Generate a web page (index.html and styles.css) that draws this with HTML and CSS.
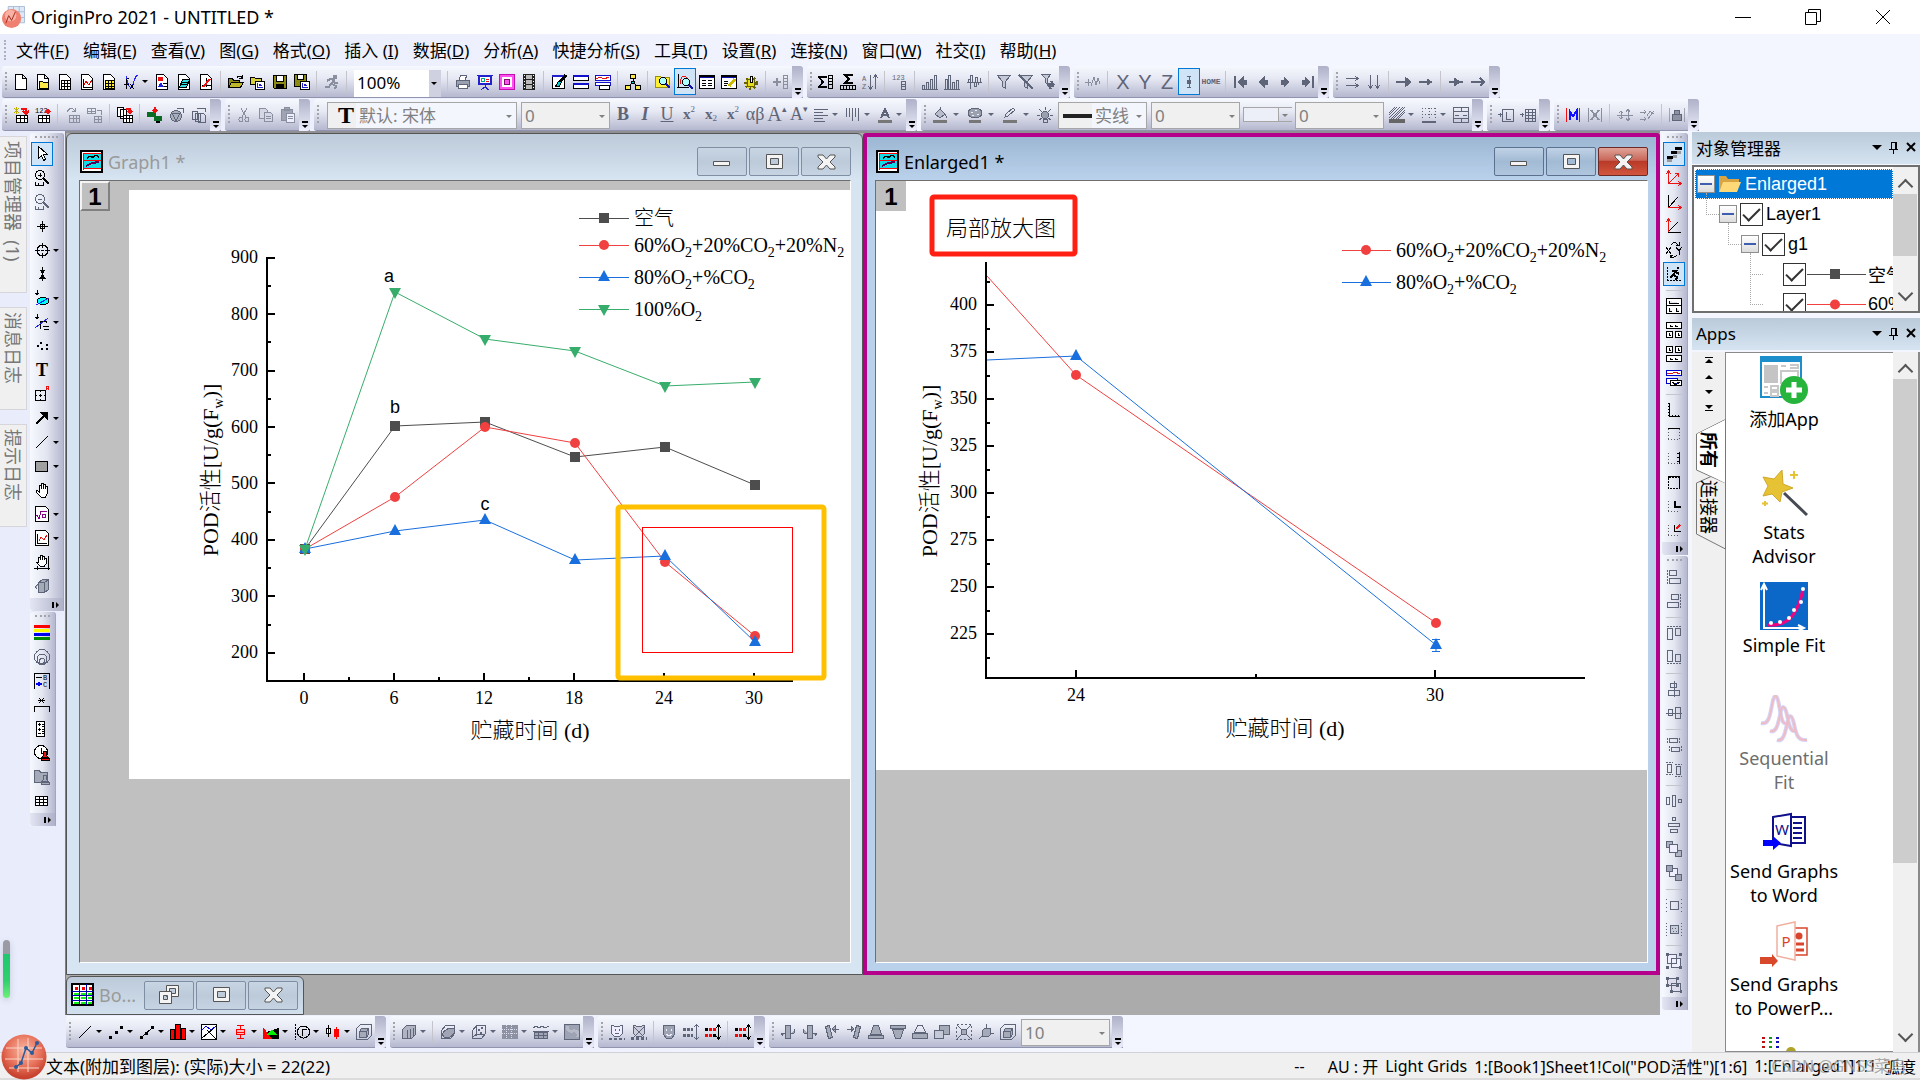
FILE: index.html
```html
<!DOCTYPE html>
<html lang="zh-CN">
<head>
	<meta charset="utf-8">
	<meta name="viewport" content="width=device-width, initial-scale=1">
	<title>OriginPro 2021 - UNTITLED *</title>
	<link rel="stylesheet" href="styles.css">
</head>
<body>
<!-- icon sprite, 16x16 unless noted -->
<svg class="sprite" aria-hidden="true">
	<symbol id="doc" viewBox="0 0 16 16"><path fill="#fff" d="M2.5.5h7l4 4v11h-11zM9.5.5v4h4"/></symbol>
	<symbol id="doc-folder" viewBox="0 0 16 16"><path fill="#fff" d="M2.5.5h7l4 4v11h-11zM9.5.5v4h4"/><path fill="#ffe94a" d="M4.5 7.5h3l1 1h5v6h-9z"/></symbol>
	<symbol id="doc-grid" viewBox="0 0 16 16"><path fill="#fff" d="M2.5.5h7l4 4v11h-11z"/><path d="M4 6.5h10M4 9.5h10M4 12.5h10M4.5 6v9M7.5 6v9M10.5 6v9"/></symbol>
	<symbol id="doc-matrix" viewBox="0 0 16 16"><path fill="#fff" d="M2.5.5h7l4 4v11h-11z"/><path fill="#ffee32" d="M4.5 6.5h9v8h-9zM4 9.5h10M4 12.5h10M7.5 6v9M10.5 6v9"/></symbol>
	<symbol id="doc-graph" viewBox="0 0 16 16"><path fill="#fff" d="M2.5.5h7l4 4v11h-11z"/><path d="M4.5 5v8.5h8"/><path stroke="#e00" d="M5 11l2-4 3 4 3-5"/></symbol>
	<symbol id="fx" viewBox="0 0 16 16"><path stroke="#22f" d="M3 2q4 18 7 8t5-8"/><path d="M6 5q-3-1-3 4v6M1 10h5M7 10l4 5M11 10l-4 5"/></symbol>
	<symbol id="doc-layout" viewBox="0 0 16 16"><path fill="#fff" d="M2.5.5h7l4 4v11h-11z"/><path stroke="none" fill="#e11" d="M4 3h5v4H4z"/><path stroke="none" fill="#22d" d="M4 13l3-5 3 5z"/><path d="M9 9.5h4M10 12.5h3"/></symbol>
	<symbol id="doc-note" viewBox="0 0 16 16"><path fill="#fff" d="M2.5.5h7l4 4v11h-11z"/><path fill="#2fe0e0" d="M6.5 5.5h7l-3 8h-7zM6 8.5h6M5 10.5h6"/></symbol>
	<symbol id="doc-arrow" viewBox="0 0 16 16"><path fill="#fff" d="M2.5.5h7l4 4v11h-11z"/><path d="M8 4v9M4 11h9"/><path stroke="#e11" stroke-width="2" d="M5 13l7-8"/></symbol>
	<symbol id="open" viewBox="0 0 16 16"><path fill="#8d8b12" d="M.5 13.5v-9h4l1 2h6v2"/><path fill="#bdb92a" d="M.5 13.5l3-5h12l-3 5z"/><path d="M9 3.5q3-3 5 0M14 1v3h-3"/></symbol>
	<symbol id="open2" viewBox="0 0 16 16"><path fill="#d8cf3a" d="M.5 10.5v-7h4l1 1h6v6z"/><path fill="#fff" d="M5.5 7.5h9v8h-9z"/><path stroke="#22c" d="M7 9v4.5h6M9 12v-2l3 2"/></symbol>
	<symbol id="save" viewBox="0 0 16 16"><path fill="#8d8b12" d="M1.5 1.5h13v13h-12l-1-1z"/><path fill="#fff" d="M4.5 1.5h7v6h-7z"/><path fill="#000" d="M4.5 10.5h7v4h-7z"/></symbol>
	<symbol id="save2" viewBox="0 0 16 16"><path fill="#8d8b12" d="M.5.5h12v12H.5z"/><path fill="#fff" d="M3.5.5h6v5h-6zM6.5 7.5h9v8h-9z"/><path stroke="#22c" d="M8 9v4.5h6M10 12v-2l3 2"/></symbol>
	<symbol id="run" viewBox="0 0 16 16"><circle cx="11" cy="3" r="2" fill="currentColor"/><path stroke-width="2" d="M3 7l3-2h4l-2 5 4 2-1 3M7 9l-2 4H1M9 6l2 3h3"/></symbol>
	<symbol id="print" viewBox="0 0 16 16"><path fill="#fff" d="M4.5 6l1-5h6l-1 5"/><path fill="#9aa0b0" d="M1.5 6.5h13v6h-13z"/><path fill="#fff" d="M3.5 10.5h9v4h-9z"/></symbol>
	<symbol id="slide" viewBox="0 0 16 16"><path fill="#fff" stroke="#22c" stroke-width="2" d="M2 2h12v8H2z"/><path stroke="#22c" d="M0 1.5h16M8 10v3l-4 3M8 13l4 3"/><path stroke="#0a8" d="M4 4h3v3H4z"/><path stroke="#e11" d="M9 5h3M9 7h3"/></symbol>
	<symbol id="camera" viewBox="0 0 16 16"><path fill="#ff50f0" stroke="#c010b0" d="M.5.5h15v15H.5z"/><path stroke="none" fill="#fff" d="M3 3h10v10H3z"/><circle cx="8" cy="8" r="3" fill="#ff50f0" stroke="#80106c"/></symbol>
	<symbol id="film" viewBox="0 0 16 16"><path stroke="none" fill="#222" d="M2 0h12v16H2z"/><path stroke="none" fill="#bbb" d="M5 1h6v4H5zM5 6h6v4H5zM5 11h6v4H5z"/><path stroke="#fff" stroke-dasharray="1 2" d="M3.5 1v14M12.5 1v14"/></symbol>
	<symbol id="paint" viewBox="0 0 16 16"><path fill="#fff" d="M1.5 1.5h12v13h-12z"/><path stroke="#22c" stroke-width="2" d="M1 2h13"/><path fill="#0cc" d="M4.5 12.5l3-5h3l-2 5z"/><path stroke-width="3" d="M9 8l6-7"/></symbol>
	<symbol id="rows" viewBox="0 0 16 16"><path fill="#fff" d="M.5 1.5h15v5H.5zM.5 9.5h15v5H.5z"/><path stroke="#11c" stroke-width="2" d="M0 2h16M0 10h16"/></symbol>
	<symbol id="rows-red" viewBox="0 0 16 16"><path fill="#fff" stroke="#11c" d="M.5 1.5h15v5H.5zM.5 8.5h15v3H.5z"/><path stroke="#e11" d="M1 5l4-2 4 2 5-2"/><path fill="#fff" d="M4.5 11.5h10v4h-10z"/></symbol>
	<symbol id="tree" viewBox="0 0 16 16"><path d="M8 4v4M8 8l-4 4M8 8l4 4"/><path fill="#ffe94a" d="M5.5.5h5v4h-5zM.5 11.5h5v4h-5zM10.5 11.5h5v4h-5z"/><path fill="#0cc" d="M6.5 7.5h3v2h-3z"/></symbol>
	<symbol id="find" viewBox="0 0 16 16"><path fill="#ffee32" stroke="#99900a" d="M.5 13.5v-11h5l1 1h8v10z"/><circle cx="8" cy="7" r="3.5" fill="#aff"/><path stroke="#11a" stroke-width="2" d="M11 10l4 4"/></symbol>
	<symbol id="find-graph" viewBox="0 0 16 16"><path d="M1.5 0v14M0 13.5h12"/><path stroke="#e11" d="M3 10q1-8 4-8t3 4"/><circle cx="9" cy="8" r="3.5" fill="#aff"/><path stroke="#11a" stroke-width="2" d="M12 11l4 4"/></symbol>
	<symbol id="table" viewBox="0 0 16 16"><path fill="#fff" d="M.5 1.5h15v13H.5z"/><path stroke="#11a" d="M1 3.500h14"/><path d="M0 2h16M3 6.5h4M9 6.5h4M3 9.5h4M9 9.5h4M3 11.5h4M9 11.5h4"/></symbol>
	<symbol id="table-edit" viewBox="0 0 16 16"><path fill="#fff" d="M.5 1.5h15v13H.5z"/><path stroke="#11a" d="M1 3.5h14"/><path d="M0 2h16M3 7.5h4M3 9.5h4M3 11.5h3"/><path stroke="#cb0" stroke-width="3" d="M8 12l6-7"/></symbol>
	<symbol id="gear" viewBox="0 0 16 16"><circle cx="8" cy="9" r="5.5" fill="#e8dd1c" stroke="#66600a" stroke-width="3" stroke-dasharray="2 2"/><circle cx="8" cy="9" r="4" fill="#e8dd1c" stroke="#66600a"/><path fill="#fff" d="M7.5 2.5h2v6h-2z"/></symbol>
	<symbol id="addcol" viewBox="0 0 16 16"><path stroke-width="2" d="M0 8h8M4 4v8"/><path d="M10.5 1.5h4v13h-4zM10 4.5h5M10 7.5h5M10 10.5h5"/></symbol>
	<symbol id="sumcol" viewBox="0 0 16 16"><path stroke-width="2" d="M8 4V3H1l4 5-4 5h7v-1"/><path d="M10.5 1.5h4v13h-4zM10 4.5h5M10 7.5h5M10 10.5h5"/></symbol>
	<symbol id="sumrow" viewBox="0 0 16 16"><path stroke-width="2" d="M12 2V1H5l4 4-4 4h7V8"/><path d="M.5 11.5h15v4H.5zM3.5 11v4M6.5 11v4M9.5 11v4M12.5 11v4"/></symbol>
	<symbol id="sort" viewBox="0 0 16 16"><text x="0" y="7" class="mini">A</text><text x="0" y="15" class="mini">Z</text><path d="M8.5 1v13M6 12l2.5 3 2.5-3M13.5 15V2M11 4l2.5-3L16 4"/></symbol>
	<symbol id="num" viewBox="0 0 16 16"><text x="0" y="6" class="mini">123</text><path d="M9.5 7.5h4v8h-4zM9 10.5h5M9 12.5h5"/></symbol>
	<symbol id="bars1" viewBox="0 0 16 16"><path d="M.5 14.5v-3h2v3M4.5 14.5v-6h2v6M8.5 14.5v-9h2v9M12.5 14.5v-13h2v13M0 15.5h16"/></symbol>
	<symbol id="bars2" viewBox="0 0 16 16"><path d="M1.5 14.5v-9h2v9M4.5 14.5v-13h2v13M8.5 14.5v-6h2v6M12.5 14.5v-8h2v8M0 15.5h16"/></symbol>
	<symbol id="bars3" viewBox="0 0 16 16"><path d="M.5 8.5h15M2.5 8V5.5h2v9M4.5 8V1.5h2V8M8.500 8v4.500h2V8M9.500 8V3.500h2V8M12.500 8v3M14.500 8V4"/></symbol>
	<symbol id="filter" viewBox="0 0 16 16"><path fill="#c5c8d6" d="M1.5 1.5h13l-5 6v7l-3-2v-5z"/></symbol>
	<symbol id="filter-x" viewBox="0 0 16 16"><path fill="#c5c8d6" d="M1.5 1.5h13l-5 6v7l-3-2v-5z"/><path stroke-width="2" d="M1 1l14 14"/></symbol>
	<symbol id="filter-r" viewBox="0 0 16 16"><path fill="#c5c8d6" d="M1.5.5h9l-3 4v6l-2-2v-4z"/><path stroke-width="2" d="M8 10h5l-2-3M14 12H9l2 3"/></symbol>
	<symbol id="wave" viewBox="0 0 16 16"><path d="M0 8.5h6M3.500 5v7M6 12l3-9 2 8 2-7 2 6"/></symbol>
	<symbol id="ibeam" viewBox="0 0 16 16"><path d="M6 2.5h4M6 13.5h4M8 3v10"/><circle cx="8" cy="8" r="2" fill="currentColor"/></symbol>
	<symbol id="first" viewBox="0 0 16 16"><path d="M2 2v12" stroke-width="2"/><path fill="currentColor" d="M5 8l5-5v3h3v4h-3v3z"/></symbol>
	<symbol id="prev" viewBox="0 0 16 16"><path fill="currentColor" d="M4 8l5-5v3h3v4H9v3z"/></symbol>
	<symbol id="next" viewBox="0 0 16 16"><path fill="currentColor" d="M12 8L7 3v3H4v4h3v3z"/></symbol>
	<symbol id="last" viewBox="0 0 16 16"><path d="M14 2v12" stroke-width="2"/><path fill="currentColor" d="M11 8L6 3v3H3v4h3v3z"/></symbol>
	<symbol id="arr-rr" viewBox="0 0 16 16"><path d="M2 4.5h12M11 2l3 2.5-3 2.5M2 11.5h12M11 9l3 2.5-3 2.5"/></symbol>
	<symbol id="arr-dd" viewBox="0 0 16 16"><path d="M4.5 1v13M2 11l2.5 3 2.5-3M11.5 1v13M9 11l2.5 3 2.5-3"/></symbol>
	<symbol id="arr-big" viewBox="0 0 16 16"><path stroke-width="2" d="M0 8h12"/><path fill="currentColor" d="M9 3l6 5-6 5z"/></symbol>
	<symbol id="arr-sm" viewBox="0 0 16 16"><path stroke-width="2" d="M1 8h12"/><path fill="currentColor" d="M9 5l5 3-5 3z"/></symbol>
	<symbol id="arr-mid" viewBox="0 0 16 16"><path stroke-width="2" d="M1 8h14"/><path fill="currentColor" d="M6 4l6 4-6 4z"/></symbol>
	<symbol id="arr-thin" viewBox="0 0 16 16"><path stroke-width="2" d="M1 8h13M10 4l4 4-4 4"/></symbol>
	<symbol id="imp-star" viewBox="0 0 16 16"><path stroke="#ba0" d="M1 1l5 5M6 1L1 6M3.5 0v7"/><path stroke="#e11" stroke-width="2" d="M8 2h5v4M10 4l3 3 3-3"/><path fill="#fff" d="M3.5 8.500h11v7h-11zM3 11.500h12M7.500 8v8M11.500 8v8"/></symbol>
	<symbol id="imp-123" viewBox="0 0 16 16"><text x="0" y="6" class="mini">123</text><path stroke="#e11" stroke-width="2" d="M13 2v4M11 4l2 2 2-2"/><path fill="#fff" d="M3.5 8.5h11v7h-11zM3 11.5h12M7.5 8v8M11.5 8v8"/></symbol>
	<symbol id="imp-loop" viewBox="0 0 16 16"><path d="M2 5q4-7 8-1M10 1v3H7M4.5 8.5h10v7h-10zM4 11.5h11M8.5 8v8M11.5 8v8"/></symbol>
	<symbol id="imp-tab" viewBox="0 0 16 16"><path d="M.5 1.5h8v5h-8zM0 4.5h9M4.5 1v6M10 3.5h4v4M7.5 9.5h7v6h-7zM7 12.5h8M11 9v7"/></symbol>
	<symbol id="imp-multi" viewBox="0 0 16 16"><path fill="#fff" d="M.5.5h6v9h-6zM3.5 2.5h6v9h-6z"/><path stroke="#e11" stroke-width="2" d="M9 2h4v4M11 4l2 2 2-2"/><path fill="#fff" d="M6.5 8.5h9v7h-9zM6 11.5h10M9.5 8v8M12.5 8v8"/></symbol>
	<symbol id="connect" viewBox="0 0 16 16"><path stroke="none" fill="#0a6b22" d="M0 5h9v5H0zM7 9h8v5H7z"/><path stroke="#e11" stroke-width="2" d="M8 0v5M6 3l2 2 2-2"/><path stroke-width="2" d="M9 15h4"/></symbol>
	<symbol id="globe" viewBox="0 0 16 16"><circle cx="7" cy="9" r="5.5" fill="#a9aebd"/><path d="M3 6l4 8 4-8zM8 1.5h6v4"/></symbol>
	<symbol id="docs" viewBox="0 0 16 16"><path d="M1.5 4.5h5v8h-5zM4.5 6.5h5v8h-5zM7.5 6.5h5l2 2v7h-7zM6 1.5h8v3"/></symbol>
	<symbol id="cut" viewBox="0 0 16 16"><path d="M5 1l5 9M11 1l-5 9"/><circle cx="5" cy="12.5" r="2"/><circle cx="11" cy="12.5" r="2"/></symbol>
	<symbol id="copy" viewBox="0 0 16 16"><path fill="#d5d8e4" d="M1.5 1.5h6l2 2v8h-8z"/><path fill="#d5d8e4" d="M6.5 5.5h6l2 2v7h-8zM8 9.5h5M8 11.5h5"/></symbol>
	<symbol id="paste" viewBox="0 0 16 16"><path fill="#a0a4b2" d="M1.5 2.5h11v11h-11zM4.5.5h5v3h-5z"/><path fill="#eef" d="M6.5 6.5h8v9h-8zM8 9.5h5M8 11.5h5"/></symbol>
	<symbol id="align" viewBox="0 0 16 16"><path d="M1 2.5h14M1 5.5h9M1 8.5h14M1 11.5h9M1 14.5h11"/></symbol>
	<symbol id="vlines" viewBox="0 0 16 16"><path d="M1.5 1v9M4.5 1v9M7.5 1v13M10.5 1v9M13.5 1v13"/></symbol>
	<symbol id="fontcolor" viewBox="0 0 16 16"><path stroke-width="2" d="M4 11l4-9 4 9M5 8h6"/><path stroke="none" fill="#777" d="M1 13h14v3H1z"/></symbol>
	<symbol id="bucket" viewBox="0 0 16 16"><path fill="#b9bccb" d="M3 7l5-5 5 5-5 4zM8 2V0M13 7q2 2 1 4"/><path stroke="none" fill="#777" d="M1 13h14v3H1z"/></symbol>
	<symbol id="palette" viewBox="0 0 16 16"><ellipse cx="8" cy="6" rx="7" ry="5" fill="#9ba0b0"/><path d="M4 5h2M8 3h2M10 7h2M5 8h2" stroke="#eee"/><path stroke="none" fill="#777" d="M2 13h12v3H2z"/></symbol>
	<symbol id="pen" viewBox="0 0 16 16"><path d="M3 10l1-3 7-6 2 2-7 6z"/><path stroke="none" fill="#777" d="M1 13h14v3H1z"/></symbol>
	<symbol id="lamp" viewBox="0 0 16 16"><circle cx="8" cy="8" r="3.500" fill="#9ba0b0"/><path d="M6 12h4v3H6zM8 0v3M0 8h3M13 8h3M2 2l3 3M14 2l-3 3M2 13l3-2M14 13l-3-2"/></symbol>
	<symbol id="hatch" viewBox="0 0 16 16"><path d="M0 6l6-6M0 11L11 0M4 12L16 0M9 12l7-7M0 8l8-8M2 12L14 0M7 12l9-9"/><path stroke="none" fill="#666" d="M0 12h16v4H0z"/></symbol>
	<symbol id="border" viewBox="0 0 16 16"><path stroke-dasharray="1 2" d="M1 1.5h14M1.5 1v12M14.5 1v12M8 1v12M1 7.5h14"/><path stroke-width="2" d="M1 15h14"/></symbol>
	<symbol id="merge" viewBox="0 0 16 16"><path d="M.5.5h15v15H.5zM0 4.5h16M0 11.5h16M8 0v4M8 12v4M2 8h4M10 8h4"/></symbol>
	<symbol id="addlayer" viewBox="0 0 16 16"><path d="M0 7.5h4M2 6v4M4.5 2.5h11v12h-11zM8 5v7h5"/></symbol>
	<symbol id="addgrid" viewBox="0 0 16 16"><path d="M0 7.5h4M2 6v4M5.5 2.5h10v12h-10zM5 5.5h11M5 8.5h11M5 11.5h11M8.5 2v13M12.5 2v13"/></symbol>
	<symbol id="mask" viewBox="0 0 16 16"><path stroke="#e11" d="M1.5 1v14M14.5 1v14"/><path stroke="#11f" stroke-width="2" d="M4.5 13V4l3.5 5 3.5-5v9"/></symbol>
	<symbol id="unmask" viewBox="0 0 16 16"><path d="M1.5 1v14M14.5 1v14"/><path stroke-width="2" d="M4 3l8 10M12 3L4 13"/></symbol>
	<symbol id="swap" viewBox="0 0 16 16"><path d="M4 4v8M2 6l2-2 2 2M2 10l2 2 2-2M11 2v12M9 5l2-3 2 3M9 11l2 3 2-3M0 8h16"/></symbol>
	<symbol id="swap2" viewBox="0 0 16 16"><path d="M1 5h6M5 3l2 2-2 2M1 12h6M5 10l2 2-2 2M8 9l3-5 4 3M9 12l6-8"/></symbol>
	<symbol id="lock" viewBox="0 0 16 16"><path fill="#8e93a4" d="M3.5 7.5h9v6h-9zM5.5 7V3.5h5V7"/><path d="M.5 1v14M15.5 1v14" opacity=".5"/></symbol>

	<symbol id="cursor" viewBox="0 0 16 16"><path fill="#fff" d="M4.5.5v12l3-3 2 5 2-1-2-5h4z"/></symbol>
	<symbol id="zoomin" viewBox="0 0 16 16"><circle cx="6" cy="5" r="4.5"/><path d="M4 5h4M6 3v4M1.5 12v3h8v-3M4.5 13v2"/><path stroke-width="2" d="M9 8l6 6"/></symbol>
	<symbol id="zoomout" viewBox="0 0 16 16"><circle cx="6" cy="5" r="4.5"/><path d="M4 5h4M1.5 12v3h8v-3M4.5 13v2"/><path stroke-width="2" d="M9 8l6 6"/></symbol>
	<symbol id="cross" viewBox="0 0 16 16"><path d="M3 8.500h11M8.500 3v11M6.500 6.500h4v4h-4z"/></symbol>
	<symbol id="target" viewBox="0 0 16 16"><circle cx="8.5" cy="8.5" r="5.5"/><path d="M1 8.5h5M11 8.5h5M8.5 1v5M8.5 11v5M7 8.5h3"/></symbol>
	<symbol id="pinch" viewBox="0 0 16 16"><path fill="currentColor" d="M8.5 1v4M6 4h5L8.500 7zM8.5 15v-4M6 12h5L8.500 9z"/></symbol>
	<symbol id="region" viewBox="0 0 16 16"><path fill="currentColor" d="M3 0v4M1 3h4L3 5z"/><ellipse cx="9" cy="11" rx="6" ry="3.5" fill="#0ff"/><path stroke="#22f" d="M2 15L15 8"/></symbol>
	<symbol id="region2" viewBox="0 0 16 16"><path fill="currentColor" d="M3 0v4M1 3h4L3 5z"/><path d="M6.5 15V7.500h6V9M9 12.5h6M10 15h5"/><path stroke="#22f" d="M1 14L14 4"/></symbol>
	<symbol id="dots" viewBox="0 0 16 16"><path stroke-width="2" d="M3 8h2M6 5h2M7 11h2M12 7h2M12 11h2"/></symbol>
	<symbol id="annot" viewBox="0 0 16 16"><path d="M1.5 4.5h10v10h-10zM5 9.5h3M6.5 8v3M6.500 6V4M6.500 13v2M1 9.5h2M10 9.5h2"/><path stroke="#e11" d="M12.5 4V.5h2V4M12 2.5h3"/></symbol>
	<symbol id="arrow" viewBox="0 0 16 16"><path stroke-width="2" d="M2 14l8-8"/><path fill="currentColor" d="M6.500 2.500h7v7z"/></symbol>
	<symbol id="line" viewBox="0 0 16 16"><path d="M2 14L14 2"/></symbol>
	<symbol id="rect" viewBox="0 0 16 16"><path fill="#a0a0a0" d="M1.5 3.5h12v10h-12z"/></symbol>
	<symbol id="hand" viewBox="0 0 16 16"><path fill="#fff" d="M5.5 10V3h2v4V1h2v6V2h2v5V4h2v7l-2 4H7L2 10l1-2z"/></symbol>
	<symbol id="eq" viewBox="0 0 16 16"><path fill="#fff" d="M1.5.5h10l3 3v12h-13z"/><path stroke="#808" d="M2 9h1l2 4 2-8h6M8.5 8.5h3v3h-3z"/></symbol>
	<symbol id="gdoc" viewBox="0 0 16 16"><path fill="#fff" d="M1.5.5h10l3 3v12h-13z"/><path d="M3.5 4v9.5h9"/><path stroke="#e11" d="M5 11l2-4 3 3 3-5"/></symbol>
	<symbol id="hand2" viewBox="0 0 16 16"><path fill="#fff" d="M4.5 8V3h2v3V1h2v5V2h2v4V4h2v5l-2 3H6L2 8z"/><path d="M0 14.5h16M14.5 2v14M3.5 12v4"/></symbol>
	<symbol id="cube" viewBox="0 0 16 16"><path fill="#a5aab8" d="M4.5 4.5l4-3h6v10l-4 3h-6zM4.5 4.5h6v10M10.5 4.5l4-3M4 6L1 9l2 2"/></symbol>
	<symbol id="stripes" viewBox="0 0 16 16"><g stroke="none"><path fill="red" d="M0 0h16v3H0z"/><path fill="#ff0" d="M0 4h16v3H0z"/><path fill="#00e" d="M0 8h16v3H0z"/><path fill="#080" d="M0 12h16v3H0z"/></g></symbol>
	<symbol id="rings" viewBox="0 0 16 16"><circle cx="8" cy="8" r="7.5"/><circle cx="8" cy="10" r="5"/><circle cx="8" cy="12" r="2.5"/></symbol>
	<symbol id="legend" viewBox="0 0 16 16"><path d="M.5 16V.5h15V16M2 4.5h6"/><path stroke="#00e" stroke-width="2" d="M2 11h6M5 9v4"/><text x="9" y="7" class="mini">B</text><text x="9" y="14" class="mini">C</text></symbol>
	<symbol id="bracket" viewBox="0 0 16 16"><path d="M.5 15V9.5h15V15M4 3.5h7M5 1l5 5M10 1L5 6"/></symbol>
	<symbol id="scale" viewBox="0 0 16 16"><path fill="#fff" d="M10.5 0v15.5h-8V.5h8M4 3.500h3M5.500 2v3M4 8.500h3M5.500 7v3M4 12.500h3M8 3.500h2M8 5.500h2M8 8.500h2M8 10.500h2M8 12.500h2"/></symbol>
	<symbol id="stamp" viewBox="0 0 16 16"><circle cx="7" cy="7" r="6.5" fill="#fff"/><path d="M7 3v5h3"/><path fill="#e11" d="M9.5 6.5h3v4l2 2h-7l2-2zM7.5 13.5h8v2h-8z"/></symbol>
	<symbol id="stamp2" viewBox="0 0 16 16"><path fill="#a5aab8" d="M.5 13.5v-12h5l1 2h7v10zM9.5 6.5h3v4l2 2h-7l2-2zM7.5 13.5h8v2h-8z"/></symbol>
	<symbol id="grid" viewBox="0 0 16 16"><path fill="#fff" d="M1.5 3.5h12v9h-12zM1 6.5h13M1 9.5h13M5.5 3v10M9.5 3v10"/></symbol>

	<symbol id="wall" viewBox="0 0 16 16"><path stroke-width="3" d="M9 2h7M5 6h6M1 11h6"/><path stroke="#999" stroke-width="3" d="M11 6h4M7 10h4M1 14h5"/></symbol>
	<symbol id="ax-both" viewBox="0 0 16 16"><path stroke="#e11" d="M2.5 14V2M0 4l2.5-3L5 4M2 13.5h12M12 11l3 2.5-3 2.5M3 13l9-9M9 3.500h3.500V7"/></symbol>
	<symbol id="ax-x" viewBox="0 0 16 16"><path d="M2.5 1v12.5L12 3"/><path stroke="#e11" d="M2 13.5h12M12 11l3 2.5-3 2.5"/></symbol>
	<symbol id="ax-y" viewBox="0 0 16 16"><path stroke="#e11" d="M2.5 14V2M0 4l2.5-3L5 4"/><path d="M2 14.5h13M3 13l9-9"/></symbol>
	<symbol id="xy" viewBox="0 0 16 16"><path d="M0 5l5 7M5 5l-5 7M10 5l3 4 3-4M13 9v4M5 3q4-5 7 0M13 0v3h-3M11 13q-4 4-7 1M4 16v-3h3"/></symbol>
	<symbol id="rungraph" viewBox="0 0 16 16"><path stroke-dasharray="2 1" d="M1.5 1v14M1 14.5h14"/><circle cx="12" cy="2" r="1"/><path stroke-width="2" d="M6 5h4l-3 4 4 2-1 3M7 9l-3 3M10 6l3 2"/></symbol>
	<symbol id="lay1" viewBox="0 0 16 16"><path fill="#fff" d="M.5.5h15v15H.5zM0 7.5h16M3 3v2h10M3 10v3h3M10 10v3h3"/></symbol>
	<symbol id="lay2" viewBox="0 0 16 16"><path fill="#fff" d="M.5.5h15v6H.5zM.5 9.5h6v6h-6zM9.5 9.5h6v6h-6zM4 3v1h3M9 3v1h3M3 11v2h2M12 11v2h2"/></symbol>
	<symbol id="lay3" viewBox="0 0 16 16"><path fill="#fff" d="M.5 9.5h15v6H.5zM.5.5h6v6h-6zM9.5.5h6v6h-6zM4 12v1h3M9 12v1h3M3 2v2h2M12 2v2h2"/></symbol>
	<symbol id="lay4" viewBox="0 0 16 16"><path fill="#fff" stroke="#00c" d="M.5.5h15v5H.5zM.5 8.5h11v5H.5z"/><path stroke="#e11" d="M1 3l4 1 4-2 5 2"/><path fill="#fff" d="M4.5 10.5h11v5h-11zM6 12l4 3 4-3"/></symbol>
	<symbol id="fr-l" viewBox="0 0 16 16"><path stroke-width="2" stroke-dasharray="1 2" d="M3 1v14M3 14h12"/><path d="M3.5 1v13.5H14"/></symbol>
	<symbol id="fr-t" viewBox="0 0 16 16"><path stroke-dasharray="1 2" d="M2.5 3v11M13.5 3v11M2 13.5h12" opacity=".6"/><path d="M2 2.5h12"/></symbol>
	<symbol id="fr-r" viewBox="0 0 16 16"><path stroke-dasharray="1 2" d="M2.5 3v11M2 13.5h12" opacity=".6"/><path d="M13.5 2v12M11 3.5h3M11 7.5h3M11 11.5h3"/></symbol>
	<symbol id="fr-a" viewBox="0 0 16 16"><path stroke-dasharray="2 1" d="M2.500 3.500h11v11h-11z"/><path d="M2 2.500h12M13.500 3v12"/></symbol>
	<symbol id="fr-i" viewBox="0 0 16 16"><path stroke-dasharray="1 2" d="M2.5 3v11M2 13.5h12" opacity=".6"/><path d="M8.5 3v6h6" stroke-width="2"/></symbol>
	<symbol id="fr-i2" viewBox="0 0 16 16"><path stroke-dasharray="1 2" d="M2.5 3v11M2 13.5h12" opacity=".6"/><path d="M8.5 3v6h6"/><path stroke="#e11" stroke-width="2" d="M10 7l4-4"/></symbol>
	<symbol id="al-l" viewBox="0 0 16 16"><path stroke-dasharray="2 1" d="M1.5 1v14"/><path d="M3.5 1.5h7v5h-7zM3.5 9.5h11v5h-11z"/></symbol>
	<symbol id="al-r" viewBox="0 0 16 16"><path stroke-dasharray="2 1" d="M14.5 1v14"/><path d="M5.5 1.5h7v5h-7zM1.5 9.5h11v5h-11z"/></symbol>
	<symbol id="al-t" viewBox="0 0 16 16"><path stroke-dasharray="2 1" d="M1 1.5h14"/><path d="M1.5 3.5h5v11h-5zM9.5 3.5h5v7h-5z"/></symbol>
	<symbol id="al-b" viewBox="0 0 16 16"><path stroke-dasharray="2 1" d="M1 14.5h14"/><path d="M1.5 1.5h5v11h-5zM9.5 5.5h5v7h-5z"/></symbol>
	<symbol id="al-v" viewBox="0 0 16 16"><path d="M8 0v16M4.5 2.5h6v4h-6zM2.5 9.5h11v5h-11z"/></symbol>
	<symbol id="al-h" viewBox="0 0 16 16"><path d="M0 8h16M2.5 4.5h4v6h-4zM9.5 2.5h5v11h-5z"/></symbol>
	<symbol id="sz-w" viewBox="0 0 16 16"><path d="M3.5 1.5h8v4h-8zM5.5 10.5h8v4h-8z"/><path stroke-dasharray="2 1" d="M1.5 1v6M13.5 1v6M3.5 9v6M15.5 9v6"/></symbol>
	<symbol id="sz-h" viewBox="0 0 16 16"><path d="M1.5 3.5h4v8h-4zM10.5 5.5h4v8h-4z"/><path stroke-dasharray="2 1" d="M0 1.5h7M0 13.5h7M9 3.5h7M9 15.5h7"/></symbol>
	<symbol id="ds-h" viewBox="0 0 16 16"><path d="M.5 4.5h3v7h-3zM6.5 2.5h3v11h-3zM12.5 6.5h3v3h-3z"/></symbol>
	<symbol id="ds-v" viewBox="0 0 16 16"><path d="M6.5.5h3v3h-3zM2.5 6.5h11v3h-11zM4.5 12.5h7v3h-7z"/></symbol>
	<symbol id="front" viewBox="0 0 16 16"><path fill="#b0b4c2" d="M.5.5h6v6h-6zM9.5 9.5h6v6h-6z"/><path fill="#eef" d="M3.5 3.5h8v8h-8z"/></symbol>
	<symbol id="back" viewBox="0 0 16 16"><path fill="#eef" d="M3.5 3.5h8v8h-8z"/><path fill="#a0a4b4" d="M.5.5h6v6h-6zM9.5 9.5h6v6h-6z"/></symbol>
	<symbol id="sel1" viewBox="0 0 16 16"><path d="M4.5 4.5h8v8h-8z"/><path stroke-dasharray="1 3" d="M.5 2v13M15.5 2v13"/></symbol>
	<symbol id="sel2" viewBox="0 0 16 16"><path d="M4.5 4.5h8v8h-8z" fill="#c8cbd8"/><path stroke-dasharray="1 2" d="M.5 2v13M15.5 2v13M6 7h5M7 10h5"/></symbol>
	<symbol id="group" viewBox="0 0 16 16"><path fill="#eef" d="M1.5 1.5h9v9h-9zM5.5 5.5h9v9h-9z"/><path stroke-width="3" stroke-dasharray="3 10" d="M0 1.5h16M0 14.5h16"/></symbol>
	<symbol id="ungroup" viewBox="0 0 16 16"><path fill="#dde" d="M1.5 1.5h9v7h-9zM5.5 6.5h9v8h-9z"/><path stroke-width="3" stroke-dasharray="3 7" d="M0 1.5h13M4 14.5h12M0 8.5h13"/></symbol>

	<symbol id="p-scatter" viewBox="0 0 16 16"><path stroke-width="3" d="M1 13.5h3M7 8.5h3M12 3.5h3"/></symbol>
	<symbol id="p-lines" viewBox="0 0 16 16"><path d="M2 14L14 3"/><path stroke-width="3" d="M1 13.5h3M6 9.5h3M12 3.5h3"/></symbol>
	<symbol id="p-bar" viewBox="0 0 16 16"><path fill="red" d="M.5 5.5h4v10h-4zM5.5.5h5v15h-5zM11.5 4.5h4v11h-4z"/></symbol>
	<symbol id="p-multi" viewBox="0 0 16 16"><path fill="#fff" d="M.5.5h15v15H.5z"/><path stroke="#00e" d="M1 6l4-4 5 4 5-4"/><path d="M1 14L13 4M6 6l9 9"/></symbol>
	<symbol id="p-box" viewBox="0 0 16 16"><path stroke="red" d="M5 1.5h7M8.5 1v14M5 14.5h7"/><path stroke="red" fill="#fbb" d="M4.5 5.5h8v5h-8zM4 8.5h9"/></symbol>
	<symbol id="p-area" viewBox="0 0 16 16"><g stroke="none"><path fill="#000" d="M0 15V9l16-5v11z"/><path fill="red" d="M0 3l9 12H0z"/><path fill="#0e0" d="M4 11l5-6 5 6z"/></g></symbol>
	<symbol id="p-polar" viewBox="0 0 16 16"><path stroke-dasharray="2 1" d="M1.5 0v16"/><circle cx="9.5" cy="8" r="6"/><path d="M8.5 12V5.500h4"/></symbol>
	<symbol id="p-stock" viewBox="0 0 16 16"><path fill="#fff" d="M3.5 1v12M1.5 4.5h4v5h-4z"/><path stroke="red" fill="red" d="M11.5 3v12M9.5 5.5h4v7h-4z"/></symbol>
	<symbol id="p-3d" viewBox="0 0 16 16"><path fill="#b0b4c2" d="M1.5 5.5l4-4h9v9l-4 4h-9zM6 6v8M9 5v9M12 4v8"/></symbol>
	<symbol id="p-3d2" viewBox="0 0 16 16"><path d="M1.5 14.5v-8l4-5h9v8l-4 5z"/><path fill="#a0a4b4" d="M2 10q6-8 12-5v4l-4 4H4z"/></symbol>
	<symbol id="p-3d3" viewBox="0 0 16 16"><path d="M1.5 14.5v-8l4-5h9v8l-4 5zM5 2v8l-4 4M5 10h9"/><path stroke-width="2" d="M7 6h2M10 4h2M4 11h2M9 9h2"/></symbol>
	<symbol id="p-heat" viewBox="0 0 16 16"><path fill="#8d92a3" stroke="none" d="M0 1h16v14H0z"/><path stroke="#dde" stroke-dasharray="1 1" d="M0 5.5h16M0 9.5h16M4.5 1v13M9.5 1v13"/></symbol>
	<symbol id="p-heat2" viewBox="0 0 16 16"><path d="M0 4l3-2 3 2 3-2 3 2 4-2M0 7.5h16"/><path fill="#a0a4b4" d="M1.5 8.5h13v6h-13zM1 11.5h14M5.5 9v5M10.5 9v5"/></symbol>
	<symbol id="p-img" viewBox="0 0 16 16"><path fill="#9ea3b3" d="M.5.5h15v15H.5z"/><path stroke="#b5b9c8" stroke-width="3" d="M3 2q0 6 6 5t5 6"/></symbol>
	<symbol id="face" viewBox="0 0 16 16"><path fill="#eef" d="M2.5 1.5h2l1 1h5l1-1h2v8l-3 3h-5l-3-3zM6.500 5v2M10.500 5v2M6 9.500h4"/><path stroke-width="2" stroke-dasharray="3 2" d="M0 15h16"/></symbol>
	<symbol id="face-x" viewBox="0 0 16 16"><path fill="#ccd" d="M2.5 1.5h2l1 1h5l1-1h2v8l-3 3h-5l-3-3z"/><path d="M2 2l11 11M14 2L3 13"/><path stroke-width="3" stroke-dasharray="3 2" d="M0 14.5h16"/></symbol>
	<symbol id="face2" viewBox="0 0 16 16"><path fill="#9ea3b3" d="M2.5 1.5h11v9l-3 4h-5l-3-4z"/><path stroke="#eef" d="M5.500 5v2M10.500 5v2M5 10q3 3 6 0"/></symbol>
	<symbol id="cells" viewBox="0 0 16 16"><path stroke-width="3" stroke-dasharray="3 1" d="M0 5.5h10M0 11.5h10"/><path d="M13.5 1v14M11 3l2.5-2L16 3M11 13l2.5 2 2.5-2"/></symbol>
	<symbol id="cells-r" viewBox="0 0 16 16"><path stroke="red" stroke-width="3" stroke-dasharray="3 1" d="M0 11.5h7M4 5.5h7"/><path stroke-width="3" d="M0 5.5h3M8 11.5h3"/><path d="M13.5 1v14M11 4l2.5-3L16 4M11 12l2.5 3 2.5-3"/></symbol>
	<symbol id="rot-l" viewBox="0 0 16 16"><path fill="#a5aab8" d="M5.5 1.5h5v13h-5zM5 9H1l2 3M11 9h3l1-4"/></symbol>
	<symbol id="rot-r" viewBox="0 0 16 16"><path fill="#a5aab8" d="M5.5 1.5h5v13h-5zM11 9h4l-2 3M5 9H2L1 5"/></symbol>
	<symbol id="tilt-l" viewBox="0 0 16 16"><path fill="#a5aab8" d="M1.5 2.5l4-1 3 12-4 1zM9 5h6M11 2L8 5l3 3z"/></symbol>
	<symbol id="tilt-r" viewBox="0 0 16 16"><path fill="#a5aab8" d="M14.5 2.5l-4-1-3 12 4 1zM7 5H1M5 2l3 3-3 3z"/></symbol>
	<symbol id="trap" viewBox="0 0 16 16"><path fill="#a5aab8" d="M5.5 1.500h5l3 9h-11zM.5 11.5h15v3H.5z"/></symbol>
	<symbol id="trap-d" viewBox="0 0 16 16"><path fill="#a5aab8" d="M5.5 14.5h5l3-9h-11zM.5 1.5h15v3H.5z"/></symbol>
	<symbol id="trap-u" viewBox="0 0 16 16"><path d="M5.5 1.5h5l3 7h-11z"/><path fill="#a5aab8" d="M.5 9.5h15v5H.5z"/></symbol>
	<symbol id="box3" viewBox="0 0 16 16"><path fill="#a5aab8" d="M5.5 1.5h10v9h-10z"/><path fill="#c5c8d6" d="M.5 6.5h9v8h-9z"/></symbol>
	<symbol id="expand" viewBox="0 0 16 16"><path d="M1 1l14 14M15 1L1 15"/><path fill="#a5aab8" d="M5.5 5.5h5v5h-5z"/><path stroke-dasharray="2 2" d="M.5.5h15v15H.5z"/></symbol>
	<symbol id="iso" viewBox="0 0 16 16"><path d="M8 0v8L1 15M8 9h8"/><path fill="#a5aab8" d="M4.5 6.5l2-2h6v6l-2 2h-6z"/></symbol>
	<symbol id="boxes" viewBox="0 0 16 16"><path d="M.5 4.5l4-4h11v11l-4 4H.5z"/><path fill="#a5aab8" d="M3.500 7.500l2-3h7v6l-2 3h-7zM3.500 7.500h7v5M10.500 7.500l2-3"/></symbol>

	<!-- window parts -->
	<symbol id="w-min" viewBox="0 0 24 24"><path fill="#f4f4f4" stroke="#555" d="M3.5 11.5h16v4h-16z"/></symbol>
	<symbol id="w-max" viewBox="0 0 24 24"><path fill="#f4f4f4" stroke="#555" fill-rule="evenodd" d="M4.5 4.5h16v14h-16zM8.5 8.5h8v6h-8z"/></symbol>
	<symbol id="w-rest" viewBox="0 0 24 24"><path fill="#f4f4f4" stroke="#555" fill-rule="evenodd" d="M9.5 2.5h12v11h-12zM12.500 5.500h6v5h-6z"/><path fill="#f4f4f4" stroke="#555" fill-rule="evenodd" d="M2.5 8.5h12v12h-12zM6.5 12.5h4v4h-4z"/></symbol>
	<symbol id="w-close" viewBox="0 0 24 24"><path fill="#f4f4f4" stroke="#555" d="M4 5h5l3.5 4 3.5-4h5v2l-5 5 5 5v2h-5l-3.500-4L9 19H4v-2l5-5-5-5z"/></symbol>
	<symbol id="w-graph" viewBox="0 0 24 24"><path fill="#fff" stroke="#000" stroke-width="2" d="M1 1h21v21H1z"/><path stroke="none" fill="#12dbe8" d="M4 4h17v15H4z"/><path stroke="red" d="M4 3.5h17M4 10.5h17M4 18.5h17M3.5 3v17"/><path stroke="#000" d="M7 8.500l3-2 3 1 3-2 3 2M7 8l3-2 3 1 3-2 3 2"/><path stroke="#505" stroke-width="2" d="M6 16l6-3 7-1"/></symbol>
	<symbol id="w-book" viewBox="0 0 24 24"><path fill="#fff" stroke="#000" stroke-width="2" d="M1 1h21v21H1z"/><path stroke="#00a" d="M8.5 1v21M15.5 1v21M1 8.5h21M1 12.5h21M1 17.5h21"/><path stroke="#1e1" stroke-width="2" stroke-dasharray="5 2" d="M3 10.5h18M3 15h18M3 20h18"/><path stroke="red" stroke-width="3" stroke-dasharray="3 4" d="M4 5h18"/></symbol>
	<symbol id="pin" viewBox="0 0 12 16"><path d="M3.5 3v7M3 3.5h5M7.5 3v7M8.5 3v7M1 10.5h9M5.5 11v4"/></symbol>
	<symbol id="x" viewBox="0 0 12 16"><path stroke-width="2" d="M2 4l8 8M10 4l-8 8"/></symbol>
</svg>

<header class="titlebar">
	<svg class="logo" viewBox="0 0 24 24"><path fill="#dfe8f4" stroke="#a9bcd8" d="M6.5.5h17v17h-17zM12 1v16M18 1v16M7 6h16M7 12h16"/><circle cx="10" cy="13" r="10" fill="#f08070"/><circle cx="9" cy="10" r="6" fill="#fac8bc" opacity=".7"/><path fill="none" stroke="#a02818" d="M4 18l3-8 3 5 4-9"/></svg>
	<h1>OriginPro 2021 - UNTITLED *</h1>
	<div class="sysbuttons">
		<button title="最小化"><svg viewBox="0 0 16 16"><path d="M0 8.5h16"/></svg></button>
		<button title="还原"><svg viewBox="0 0 16 16"><path d="M.5 3.5h11v12H.5zM3.5 3V.5h12v12H12"/></svg></button>
		<button title="关闭"><svg viewBox="0 0 16 16"><path d="M1 1l14 14M15 1L1 15"/></svg></button>
	</div>
</header>

<nav class="menubar">
	<a href="#">文件(<u>F</u>)</a><a href="#">编辑(<u>E</u>)</a><a href="#">查看(<u>V</u>)</a><a href="#">图(<u>G</u>)</a><a href="#">格式(<u>O</u>)</a><a href="#">插入 (<u>I</u>)</a><a href="#">数据(<u>D</u>)</a><a href="#">分析(<u>A</u>)</a><a href="#">快捷分析(<u>S</u>)</a><a href="#">工具(<u>T</u>)</a><a href="#">设置(<u>R</u>)</a><a href="#">连接(<u>N</u>)</a><a href="#">窗口(<u>W</u>)</a><a href="#">社交(<u>I</u>)</a><a href="#">帮助(<u>H</u>)</a>
</nav>

<div class="toolrow">
	<div class="toolbar">
		<button title="新建项目"><svg><use href="#doc"/></svg></button>
		<button title="新建文件夹"><svg><use href="#doc-folder"/></svg></button>
		<button title="新建工作簿"><svg><use href="#doc-grid"/></svg></button>
		<button title="新建图"><svg><use href="#doc-graph"/></svg></button>
		<button title="新建矩阵"><svg><use href="#doc-matrix"/></svg></button>
		<button class="drop" title="新建函数图"><svg><use href="#fx"/></svg></button>
		<button title="新建布局"><svg><use href="#doc-layout"/></svg></button>
		<button title="新建备注"><svg><use href="#doc-note"/></svg></button>
		<button title="数字化"><svg><use href="#doc-arrow"/></svg></button>
		<i></i>
		<button title="打开"><svg><use href="#open"/></svg></button>
		<button title="打开模板"><svg><use href="#open2"/></svg></button>
		<button title="保存"><svg><use href="#save"/></svg></button>
		<button title="保存模板"><svg><use href="#save2"/></svg></button>
		<i></i>
		<button class="off" title="运行"><svg><use href="#run"/></svg></button>
		<i></i>
		<span class="combo zoom"><select aria-label="缩放"><option>100%</option></select></span>
		<i></i>
		<button class="dim" title="打印"><svg><use href="#print"/></svg></button>
		<button title="幻灯片"><svg><use href="#slide"/></svg></button>
		<button title="截图"><svg><use href="#camera"/></svg></button>
		<button title="视频"><svg><use href="#film"/></svg></button>
		<i></i>
		<button title="主题"><svg><use href="#paint"/></svg></button>
		<button title="分栏"><svg><use href="#rows"/></svg></button>
		<button title="合并图"><svg><use href="#rows-red"/></svg></button>
		<i></i>
		<button title="代码"><svg><use href="#tree"/></svg></button>
		<i></i>
		<button title="项目管理器"><svg><use href="#find"/></svg></button>
		<button class="on" title="对象管理器"><svg><use href="#find-graph"/></svg></button>
		<button title="结果日志"><svg><use href="#table"/></svg></button>
		<button title="命令窗口"><svg><use href="#table-edit"/></svg></button>
		<button title="代码生成器"><svg><use href="#gear"/></svg></button>
		<i></i>
		<button class="off" title="添加新列"><svg><use href="#addcol"/></svg></button>
		<button class="more" title="工具栏选项"></button>
	</div>
	<div class="toolbar">
		<button title="列统计"><svg><use href="#sumcol"/></svg></button>
		<button title="行统计"><svg><use href="#sumrow"/></svg></button>
		<button class="dim" title="排序"><svg><use href="#sort"/></svg></button>
		<i></i>
		<button class="dim" title="行号"><svg><use href="#num"/></svg></button>
		<i></i>
		<button class="dim" title="升序"><svg><use href="#bars1"/></svg></button>
		<button class="dim" title="随机"><svg><use href="#bars2"/></svg></button>
		<button class="dim" title="正态"><svg><use href="#bars3"/></svg></button>
		<i></i>
		<button class="dim" title="过滤"><svg><use href="#filter"/></svg></button>
		<button class="dim" title="清除过滤"><svg><use href="#filter-x"/></svg></button>
		<button class="dim" title="重新过滤"><svg><use href="#filter-r"/></svg></button>
		<button class="more" title="工具栏选项"></button>
	</div>
	<div class="toolbar">
		<button class="off" title="添加曲线"><svg><use href="#wave"/></svg></button>
		<i></i>
		<button class="dim axis">X</button><button class="dim axis">Y</button><button class="dim axis">Z</button>
		<button class="dim on" title="误差棒"><svg><use href="#ibeam"/></svg></button>
		<button class="dim tiny">HOME</button>
		<i></i>
		<button class="dim" title="最前"><svg><use href="#first"/></svg></button>
		<button class="dim" title="上一个"><svg><use href="#prev"/></svg></button>
		<button class="dim" title="下一个"><svg><use href="#next"/></svg></button>
		<button class="dim" title="最后"><svg><use href="#last"/></svg></button>
		<button class="more" title="工具栏选项"></button>
	</div>
	<div class="toolbar">
		<button class="dim" title="水平对齐"><svg><use href="#arr-rr"/></svg></button>
		<button class="dim" title="垂直对齐"><svg><use href="#arr-dd"/></svg></button>
		<i></i>
		<button class="dim" title="放大箭头"><svg><use href="#arr-big"/></svg></button>
		<button class="dim" title="缩小箭头"><svg><use href="#arr-sm"/></svg></button>
		<i></i>
		<button class="dim" title="加长箭头"><svg><use href="#arr-mid"/></svg></button>
		<button class="dim" title="缩短箭头"><svg><use href="#arr-thin"/></svg></button>
		<button class="more" title="工具栏选项"></button>
	</div>
</div>

<div class="toolrow second">
	<div class="toolbar">
		<button title="导入向导"><svg><use href="#imp-star"/></svg></button>
		<button title="导入单个ASCII"><svg><use href="#imp-123"/></svg></button>
		<i></i>
		<button class="off" title="重新导入"><svg><use href="#imp-loop"/></svg></button>
		<button class="off" title="导入表格"><svg><use href="#imp-tab"/></svg></button>
		<i></i>
		<button title="导入多个ASCII"><svg><use href="#imp-multi"/></svg></button>
		<i></i>
		<button title="连接数据"><svg><use href="#connect"/></svg></button>
		<button class="dim" title="数据库"><svg><use href="#globe"/></svg></button>
		<button class="dim" title="批处理"><svg><use href="#docs"/></svg></button>
		<button class="more" title="工具栏选项"></button>
	</div>
	<div class="toolbar">
		<button class="off" title="剪切"><svg><use href="#cut"/></svg></button>
		<button class="off" title="复制"><svg><use href="#copy"/></svg></button>
		<button class="off" title="粘贴"><svg><use href="#paste"/></svg></button>
		<button class="more" title="工具栏选项"></button>
	</div>
	<div class="toolbar">
		<span class="combo font"><b aria-hidden="true">T</b><select aria-label="字体" disabled><option>默认: 宋体</option></select></span>
		<span class="combo"><select aria-label="字号" disabled><option>0</option></select></span>
		<button class="dim serif"><b>B</b></button>
		<button class="dim serif"><b><em>I</em></b></button>
		<button class="dim serif"><u>U</u></button>
		<button class="dim serif small">x<sup>2</sup></button>
		<button class="dim serif small">x<sub>2</sub></button>
		<button class="dim serif small">x<sup>2</sup></button>
		<button class="dim serif">αβ</button>
		<button class="dim serif big">A<sup>▴</sup></button>
		<button class="dim serif">A<sup>▾</sup></button>
		<button class="dim drop" title="对齐"><svg><use href="#align"/></svg></button>
		<button class="dim drop" title="分布"><svg><use href="#vlines"/></svg></button>
		<button class="dim drop" title="字体颜色"><svg><use href="#fontcolor"/></svg></button>
		<button class="more" title="工具栏选项"></button>
	</div>
	<div class="toolbar">
		<button class="dim drop wide" title="填充颜色"><svg><use href="#bucket"/></svg></button>
		<button class="dim drop wide" title="调色板"><svg><use href="#palette"/></svg></button>
		<button class="dim drop wide" title="线条颜色"><svg><use href="#pen"/></svg></button>
		<button class="dim" title="光照"><svg><use href="#lamp"/></svg></button>
		<span class="combo linestyle"><b></b><select aria-label="线型" disabled><option>实线</option></select></span>
		<span class="combo"><select aria-label="线宽" disabled><option>0</option></select></span>
		<span class="combo swatch"><select aria-label="图案" disabled><option></option></select></span>
		<span class="combo"><select aria-label="图案宽度" disabled><option>0</option></select></span>
		<button class="dim drop" title="填充图案"><svg><use href="#hatch"/></svg></button>
		<button class="dim drop" title="边框"><svg><use href="#border"/></svg></button>
		<button class="dim" title="合并单元格"><svg><use href="#merge"/></svg></button>
		<button class="more" title="工具栏选项"></button>
	</div>
	<div class="toolbar">
		<button class="dim" title="添加图层"><svg><use href="#addlayer"/></svg></button>
		<button class="dim" title="添加网格"><svg><use href="#addgrid"/></svg></button>
		<button class="more" title="工具栏选项"></button>
	</div>
	<div class="toolbar">
		<button title="屏蔽"><svg><use href="#mask"/></svg></button>
		<button class="off" title="取消屏蔽"><svg><use href="#unmask"/></svg></button>
		<i></i>
		<button class="off" title="交换屏蔽"><svg><use href="#swap"/></svg></button>
		<button class="off" title="屏蔽颜色"><svg><use href="#swap2"/></svg></button>
		<i></i>
		<button class="dim" title="锁定"><svg><use href="#lock"/></svg></button>
		<button class="more" title="工具栏选项"></button>
	</div>
</div>

<main>
	<aside class="leftdock">
		<div class="sidetabs">
			<button class="long">项目管理器 &nbsp;(1)</button>
			<button>消息日志</button>
			<button>提示日志</button>
		</div>
		<div class="vbars">
			<div class="toolbar vertical tools">
				<button class="on" title="指针"><svg><use href="#cursor"/></svg></button>
				<button title="放大"><svg><use href="#zoomin"/></svg></button>
				<button class="dim" title="缩小"><svg><use href="#zoomout"/></svg></button>
				<button title="屏幕读取"><svg><use href="#cross"/></svg></button>
				<button class="drop" title="数据读取"><svg><use href="#target"/></svg></button>
				<button title="数据选择"><svg><use href="#pinch"/></svg></button>
				<button class="drop" title="区域选择"><svg><use href="#region"/></svg></button>
				<button class="drop" title="区域屏蔽"><svg><use href="#region2"/></svg></button>
				<button title="绘制数据"><svg><use href="#dots"/></svg></button>
				<button class="serif" title="文本"><b>T</b></button>
				<button title="注释"><svg><use href="#annot"/></svg></button>
				<button class="drop" title="箭头"><svg><use href="#arrow"/></svg></button>
				<button class="drop" title="直线"><svg><use href="#line"/></svg></button>
				<button class="drop" title="矩形"><svg><use href="#rect"/></svg></button>
				<button title="平移"><svg><use href="#hand"/></svg></button>
				<button class="drop" title="公式"><svg><use href="#eq"/></svg></button>
				<button class="drop" title="插入图"><svg><use href="#gdoc"/></svg></button>
				<button title="缩放平移"><svg><use href="#hand2"/></svg></button>
				<button class="dim" title="旋转"><svg><use href="#cube"/></svg></button>
				<button class="more" title="工具栏选项"></button>
			</div>
			<div class="toolbar vertical">
				<button title="颜色标尺"><svg><use href="#stripes"/></svg></button>
				<button class="dim" title="气泡标尺"><svg><use href="#rings"/></svg></button>
				<button title="图例"><svg><use href="#legend"/></svg></button>
				<button title="星号括号"><svg><use href="#bracket"/></svg></button>
				<button title="比例尺"><svg><use href="#scale"/></svg></button>
				<button title="日期时间"><svg><use href="#stamp"/></svg></button>
				<button class="dim" title="项目路径"><svg><use href="#stamp2"/></svg></button>
				<button title="新建表格"><svg><use href="#grid"/></svg></button>
				<button class="more" title="工具栏选项"></button>
			</div>
		</div>
		<div class="meter"></div>
	</aside>

	<div class="center">
		<div class="desktop">
			<div class="windows">
				<section class="window">
					<header>
						<svg><use href="#w-graph"/></svg><h2>Graph1 *</h2>
						<button title="最小化"><svg><use href="#w-min"/></svg></button><button title="最大化"><svg><use href="#w-max"/></svg></button><button title="关闭"><svg><use href="#w-close"/></svg></button>
					</header>
					<div class="canvas">
						<button class="layer">1</button>
						<svg class="page inset" viewBox="129 190 721 589">
							<defs>
								<marker id="sq" markerUnits="userSpaceOnUse" markerWidth="12" markerHeight="12" refX="6" refY="6"><path fill="#4d4d4d" d="M1 1h10v10H1z"/></marker>
								<marker id="ci" markerUnits="userSpaceOnUse" markerWidth="12" markerHeight="12" refX="6" refY="6"><circle cx="6" cy="6" r="5" fill="#f14040"/></marker>
								<marker id="up" markerUnits="userSpaceOnUse" markerWidth="14" markerHeight="14" refX="7" refY="8"><path fill="#1a6fdf" d="M7 1l6 11H1z"/></marker>
								<marker id="dn" markerUnits="userSpaceOnUse" markerWidth="14" markerHeight="14" refX="7" refY="5"><path fill="#37ad6b" d="M7 12L1 1h12z"/></marker>
							</defs>
							<path class="axis" d="M267 257v424h526M267 258h8M267 314h8M267 371h8M267 427h8M267 483h8M267 540h8M267 596h8M267 653h8M267 286h4M267 342h4M267 399h4M267 455h4M267 512h4M267 568h4M267 625h4M304 681v-8M394 681v-8M484 681v-8M574 681v-8M664 681v-8M754 681v-8M349 681v-4M439 681v-4M529 681v-4M619 681v-4M709 681v-4"/>
							<g class="ylab">
								<text x="258" y="263">900</text><text x="258" y="320">800</text><text x="258" y="376">700</text><text x="258" y="433">600</text><text x="258" y="489">500</text><text x="258" y="545">400</text><text x="258" y="602">300</text><text x="258" y="658">200</text>
							</g>
							<g class="xlab">
								<text x="304" y="704">0</text><text x="394" y="704">6</text><text x="484" y="704">12</text><text x="574" y="704">18</text><text x="664" y="704">24</text><text x="754" y="704">30</text>
							</g>
							<text class="title" x="530" y="738">贮藏时间 (d)</text>
							<text class="title" transform="translate(218 470) rotate(-90)">POD活性[U/g(F<tspan dy="5" class="sub">w</tspan><tspan dy="-5">)]</tspan></text>
							<g class="series">
								<polyline class="s1" points="305,549 395,426 485,422 575,457 665,447 755,485"/>
								<polyline class="s2" points="305,549 395,497 485,427 575,443 665,562 755,636"/>
								<polyline class="s3" points="305,549 395,531 485,520 575,560 665,556 755,642"/>
								<polyline class="s4" points="305,549 395,292 485,339 575,351 665,386 755,382"/>
								<polyline class="s1 key" points="579,218 604,218 629,218"/>
								<polyline class="s2 key" points="579,245 604,245 629,245"/>
								<polyline class="s3 key" points="579,277 604,277 629,277"/>
								<polyline class="s4 key" points="579,309 604,309 629,309"/>
							</g>
							<g class="legend">
								<text x="634" y="225">空气</text>
								<text x="634" y="252">60%O<tspan dy="5" class="sub">2</tspan><tspan dy="-5">+20%CO</tspan><tspan dy="5" class="sub">2</tspan><tspan dy="-5">+20%N</tspan><tspan dy="5" class="sub">2</tspan></text>
								<text x="634" y="284">80%O<tspan dy="5" class="sub">2</tspan><tspan dy="-5">+%CO</tspan><tspan dy="5" class="sub">2</tspan></text>
								<text x="634" y="316">100%O<tspan dy="5" class="sub">2</tspan></text>
							</g>
							<g class="mark"><text x="389" y="282">a</text><text x="395" y="413">b</text><text x="485" y="510">c</text></g>
							<rect x="642.5" y="527.5" width="150" height="125" fill="none" stroke="red"/>
							<rect x="618" y="507" width="206" height="171" rx="2" fill="none" stroke="#ffc000" stroke-width="5"/>
						</svg>
					</div>
				</section>
				<section class="window active">
					<header>
						<svg><use href="#w-graph"/></svg><h2>Enlarged1 *</h2>
						<button title="最小化"><svg><use href="#w-min"/></svg></button><button title="最大化"><svg><use href="#w-max"/></svg></button><button class="close" title="关闭"><svg><use href="#w-close"/></svg></button>
					</header>
					<div class="canvas">
						<button class="layer">1</button>
						<svg class="page" viewBox="876 181 771 589">
							<path class="axis" d="M986 262v416h599M986 305h8M986 352h8M986 399h8M986 446h8M986 493h8M986 540h8M986 587h8M986 634h8M986 282h4M986 329h4M986 376h4M986 423h4M986 470h4M986 517h4M986 564h4M986 611h4M986 658h4M1076 678v-8M1435 678v-8M1256 678v-4"/>
							<g class="ylab">
								<text x="977" y="310">400</text><text x="977" y="357">375</text><text x="977" y="404">350</text><text x="977" y="451">325</text><text x="977" y="498">300</text><text x="977" y="545">275</text><text x="977" y="592">250</text><text x="977" y="639">225</text>
							</g>
							<g class="xlab"><text x="1076" y="701">24</text><text x="1435" y="701">30</text></g>
							<text class="title" x="1285" y="736">贮藏时间 (d)</text>
							<text class="title" transform="translate(937 471) rotate(-90)">POD活性[U/g(F<tspan dy="5" class="sub">w</tspan><tspan dy="-5">)]</tspan></text>
							<g class="series">
								<polyline class="s2 cut" points="987,276 1076,375 1436,623"/>
								<polyline class="s3 cut" points="987,360 1076,356 1436,645"/>
								<path stroke="#1a6fdf" d="M1436 639v13M1432 639.5h8M1432 651.5h8"/>
								<polyline class="s2 key" points="1342,250 1366,250 1391,250"/>
								<polyline class="s3 key" points="1342,282 1366,282 1391,282"/>
							</g>
							<g class="legend">
								<text x="1396" y="257">60%O<tspan dy="5" class="sub">2</tspan><tspan dy="-5">+20%CO</tspan><tspan dy="5" class="sub">2</tspan><tspan dy="-5">+20%N</tspan><tspan dy="5" class="sub">2</tspan></text>
								<text x="1396" y="289">80%O<tspan dy="5" class="sub">2</tspan><tspan dy="-5">+%CO</tspan><tspan dy="5" class="sub">2</tspan></text>
							</g>
							<text class="title" x="1001" y="236">局部放大图</text>
							<rect x="932" y="197" width="143" height="57" rx="2" fill="none" stroke="#ff2013" stroke-width="5"/>
						</svg>
					</div>
				</section>
			</div>
			<section class="window minimized">
				<header>
					<svg><use href="#w-book"/></svg><h2>Bo...</h2>
					<button title="还原"><svg><use href="#w-rest"/></svg></button><button title="最大化"><svg><use href="#w-max"/></svg></button><button title="关闭"><svg><use href="#w-close"/></svg></button>
				</header>
			</section>
		</div>
		<div class="toolrow plots">
			<div class="toolbar">
				<button class="drop" title="折线图"><svg><use href="#line"/></svg></button>
				<button class="drop" title="散点图"><svg><use href="#p-scatter"/></svg></button>
				<button class="drop" title="点线图"><svg><use href="#p-lines"/></svg></button>
				<button class="drop" title="柱状图"><svg><use href="#p-bar"/></svg></button>
				<button class="drop" title="多图层"><svg><use href="#p-multi"/></svg></button>
				<button class="drop" title="箱线图"><svg><use href="#p-box"/></svg></button>
				<button class="drop" title="面积图"><svg><use href="#p-area"/></svg></button>
				<button class="drop" title="极坐标图"><svg><use href="#p-polar"/></svg></button>
				<button class="drop" title="股票图"><svg><use href="#p-stock"/></svg></button>
				<button class="dim" title="模板库"><svg><use href="#boxes"/></svg></button>
				<button class="more" title="工具栏选项"></button>
			</div>
			<div class="toolbar">
				<button class="dim drop" title="3D柱状图"><svg><use href="#p-3d"/></svg></button>
				<i></i>
				<button class="dim drop" title="3D曲面"><svg><use href="#p-3d2"/></svg></button>
				<button class="dim drop" title="3D散点"><svg><use href="#p-3d3"/></svg></button>
				<button class="dim drop" title="热图"><svg><use href="#p-heat"/></svg></button>
				<button class="dim drop" title="剖面"><svg><use href="#p-heat2"/></svg></button>
				<button class="dim" title="图像"><svg><use href="#p-img"/></svg></button>
				<button class="more" title="工具栏选项"></button>
			</div>
			<div class="toolbar">
				<button class="dim" title="屏蔽点"><svg><use href="#face"/></svg></button>
				<button class="dim" title="取消屏蔽点"><svg><use href="#face-x"/></svg></button>
				<i></i>
				<button class="dim" title="屏蔽颜色"><svg><use href="#face2"/></svg></button>
				<button class="dim" title="范围"><svg><use href="#cells"/></svg></button>
				<button title="屏蔽范围"><svg><use href="#cells-r"/></svg></button>
				<i></i>
				<button title="交换范围"><svg><use href="#cells-r"/></svg></button>
				<button class="more" title="工具栏选项"></button>
			</div>
			<div class="toolbar">
				<button class="dim" title="逆时针旋转"><svg><use href="#rot-l"/></svg></button>
				<button class="dim" title="顺时针旋转"><svg><use href="#rot-r"/></svg></button>
				<button class="dim" title="左倾"><svg><use href="#tilt-l"/></svg></button>
				<button class="dim" title="右倾"><svg><use href="#tilt-r"/></svg></button>
				<button class="dim" title="下倾"><svg><use href="#trap"/></svg></button>
				<button class="dim" title="上倾"><svg><use href="#trap-d"/></svg></button>
				<button class="dim" title="增加透视"><svg><use href="#trap-u"/></svg></button>
				<button class="dim" title="减少透视"><svg><use href="#box3"/></svg></button>
				<button class="dim" title="适应框架"><svg><use href="#expand"/></svg></button>
				<button class="dim" title="重置旋转"><svg><use href="#iso"/></svg></button>
				<button class="dim" title="重置"><svg><use href="#boxes"/></svg></button>
				<span class="combo"><select aria-label="旋转角度" disabled><option>10</option></select></span>
				<button class="more" title="工具栏选项"></button>
			</div>
		</div>
	</div>

	<aside class="vbars right">
		<div class="toolbar vertical">
			<button class="on" title="抗锯齿"><svg><use href="#wall"/></svg></button>
			<button title="重新缩放"><svg><use href="#ax-both"/></svg></button>
			<button title="缩放X"><svg><use href="#ax-x"/></svg></button>
			<button title="缩放Y"><svg><use href="#ax-y"/></svg></button>
			<button title="交换XY"><svg><use href="#xy"/></svg></button>
			<button class="on" title="快速模式"><svg><use href="#rungraph"/></svg></button>
			<i></i>
			<button title="提取图层"><svg><use href="#lay1"/></svg></button>
			<button title="提取到图"><svg><use href="#lay2"/></svg></button>
			<button title="合并图层"><svg><use href="#lay3"/></svg></button>
			<button title="合并图表"><svg><use href="#lay4"/></svg></button>
			<i></i>
			<button title="左下轴"><svg><use href="#fr-l"/></svg></button>
			<button title="上轴"><svg><use href="#fr-t"/></svg></button>
			<button title="右轴"><svg><use href="#fr-r"/></svg></button>
			<button title="框架"><svg><use href="#fr-a"/></svg></button>
			<button title="插入图层"><svg><use href="#fr-i"/></svg></button>
			<button title="插入带数据图层"><svg><use href="#fr-i2"/></svg></button>
			<button class="more" title="工具栏选项"></button>
		</div>
		<div class="toolbar vertical">
			<button class="dim" title="左对齐"><svg><use href="#al-l"/></svg></button>
			<button class="dim" title="右对齐"><svg><use href="#al-r"/></svg></button>
			<i></i>
			<button class="dim" title="顶端对齐"><svg><use href="#al-t"/></svg></button>
			<button class="dim" title="底端对齐"><svg><use href="#al-b"/></svg></button>
			<i></i>
			<button class="dim" title="垂直居中"><svg><use href="#al-v"/></svg></button>
			<button class="dim" title="水平居中"><svg><use href="#al-h"/></svg></button>
			<i></i>
			<button class="dim" title="等宽"><svg><use href="#sz-w"/></svg></button>
			<button class="dim" title="等高"><svg><use href="#sz-h"/></svg></button>
			<i></i>
			<button class="dim" title="水平分布"><svg><use href="#ds-h"/></svg></button>
			<button class="dim" title="垂直分布"><svg><use href="#ds-v"/></svg></button>
			<button class="dim" title="置前"><svg><use href="#front"/></svg></button>
			<button class="dim" title="置后"><svg><use href="#back"/></svg></button>
			<i></i>
			<button class="dim" title="前置数据"><svg><use href="#sel1"/></svg></button>
			<button class="dim" title="后置数据"><svg><use href="#sel2"/></svg></button>
			<i></i>
			<button class="dim" title="组合"><svg><use href="#group"/></svg></button>
			<button class="dim" title="取消组合"><svg><use href="#ungroup"/></svg></button>
			<button class="more" title="工具栏选项"></button>
		</div>
	</aside>

	<aside class="panels">
		<section class="panel">
			<header><h2>对象管理器</h2><button class="menu" title="菜单"></button><button title="固定"><svg><use href="#pin"/></svg></button><button title="关闭"><svg><use href="#x"/></svg></button></header>
			<div class="objects">
				<ul class="tree">
					<li class="selected"><button class="fold" title="折叠"></button><svg class="folder" viewBox="0 0 24 20"><path fill="#d9a441" d="M1 18V2h7l2 3h11v4H5z"/><path fill="#ffd978" d="M1 18L5 8h18l-4 10z"/></svg><span>Enlarged1</span></li>
					<li class="l1"><button class="fold" title="折叠"></button><label><input type="checkbox" checked>Layer1</label></li>
					<li class="l2"><button class="fold" title="折叠"></button><label><input type="checkbox" checked>g1</label></li>
					<li class="l3"><label><input type="checkbox" checked><svg class="sample" viewBox="0 0 60 16"><path stroke="#4d4d4d" d="M1 8.5h59"/><path fill="#4d4d4d" stroke="none" d="M24 3h10v10H24z"/></svg>空气</label></li>
					<li class="l3"><label><input type="checkbox" checked><svg class="sample" viewBox="0 0 60 16"><path stroke="#f14040" d="M1 8.5h59"/><circle cx="29" cy="8.5" r="5" fill="#f14040" stroke="none"/></svg>60%O</label></li>
				</ul>
				<div class="scroll short"><b></b></div>
			</div>
		</section>
		<section class="panel apps">
			<header><h2>Apps</h2><button class="menu" title="菜单"></button><button title="固定"><svg><use href="#pin"/></svg></button><button title="关闭"><svg><use href="#x"/></svg></button></header>
			<div class="appbody">
				<div class="apptabs">
					<svg class="outline" viewBox="0 0 34 200"><path fill="#fff" stroke="#777" d="M33.5 67.5L4.5 82v36l29 13z"/><path fill="#f0f0f0" stroke="#777" d="M19 124.5L4.5 131v51l29 15v-66z"/><path fill="#fff" stroke="none" d="M33 68L5 82v35l28 14z"/><g fill="#000" stroke="none"><path d="M13 5h8v1h-8zM13 11l4-4 4 4zM13 27l4-4 4 4zM13 38h8l-4 4zM13 53h8l-4 4zM13 58h8v1h-8z"/></g></svg>
					<button class="current">所有</button>
					<button>连接器</button>
				</div>
				<div class="applist">
					<a href="#"><svg viewBox="0 0 48 48"><path fill="#fff" stroke="#1b8ecb" stroke-width="2" d="M1 1h40v40H1z"/><path fill="#1b8ecb" d="M0 0h42v6H0z"/><path fill="#c4c4c4" d="M4 9h14v18H4z"/><path fill="none" stroke="#c8c8c8" stroke-width="2" d="M21 10h5M30 9h8v3h-8M21 15h17v12H21zM4 31h4M11 30h7v4h-7zM4 37h4M11 36h7v4h-7z"/><circle cx="34" cy="34" r="14" fill="#26b43c"/><path stroke="#fff" stroke-width="5" d="M34 26v16M26 34h16"/></svg>添加App</a>
					<a href="#"><svg viewBox="0 0 48 48"><path stroke="#474a52" stroke-width="3" d="M24 24l23 22"/><path fill="#e6c235" stroke="#d0a82a" d="M22 1l1 14 10 4-11 4-2 10-8-8-9 2 5-10-5-9 11 2z"/><path stroke="#e6c235" stroke-width="2" d="M34 2v8M30 6h8M5 32v5M2 34.5h6"/></svg>Stats<br>Advisor</a>
					<a href="#"><svg viewBox="0 0 48 48"><path fill="#0b68c9" d="M0 0h48v48H0z"/><path fill="none" stroke="#fff" stroke-width="2" d="M4 46V4M1 8l3-6 3 6M3 46h40M38 43l6 3-6 3"/><path fill="none" stroke="#f0047f" stroke-width="3" d="M7 43q18 1 26-10 8-12 10-27"/><g fill="#fff"><circle cx="11" cy="41" r="2"/><circle cx="20" cy="40" r="2"/><circle cx="29" cy="36" r="2"/><circle cx="34" cy="28" r="2"/><circle cx="41" cy="20" r="2"/><circle cx="43" cy="7" r="2"/></g></svg>Simple Fit</a>
					<a href="#" class="faded"><svg viewBox="0 0 48 48"><g fill="none" stroke="#d4d4f8" stroke-width="4"><path d="M1 28c8 2 9-8 11-18 2-12 5-12 7 0 2 10 3 20 7 18"/><path d="M10 36c6 2 8-6 10-16 2-11 5-10 7 0 2 9 3 17 8 16"/><path d="M17 45c6 2 8-6 10-16 2-11 5-10 7 0 2 9 3 17 13 16"/></g><g fill="none" stroke="#eebcc4" stroke-width="2"><path d="M1 28c8 2 9-8 11-18 2-12 5-12 7 0 2 10 3 20 7 18"/><path d="M10 36c6 2 8-6 10-16 2-11 5-10 7 0 2 9 3 17 8 16"/><path d="M17 45c6 2 8-6 10-16 2-11 5-10 7 0 2 9 3 17 13 16"/></g></svg>Sequential<br>Fit</a>
					<a href="#"><svg viewBox="0 0 48 48"><path fill="#fff" stroke="#10108c" stroke-width="2" d="M31 9h14v26H31zM33 15h9M33 20h9M33 25h9M33 30h9"/><path fill="#fff" stroke="#10108c" stroke-width="2" d="M13 9l18-3v32l-18-3z"/><text x="22" y="27" class="applet word">W</text><path fill="#00f" d="M3 32h10v-4l8 7-8 7v-4H3z"/></svg>Send Graphs<br>to Word</a>
					<a href="#"><svg viewBox="0 0 48 48"><path fill="#fff" stroke="#d9452c" stroke-width="1.5" d="M34 7h13v27H34z"/><path fill="#fff" stroke="#f0b0a0" stroke-width="1.5" d="M17 5l18-4v38l-18-4z"/><circle cx="39" cy="15" r="3.5" fill="#d9452c"/><path stroke="#d9452c" stroke-width="3" d="M36 23h8M36 29h8"/><text x="26" y="26" class="applet ppt">P</text><path fill="#d8492b" d="M0 36h12v-3l6 7-6 6v-3H0z"/></svg>Send Graphs<br>to PowerP...</a>
					<a href="#" title="更多"><svg viewBox="0 0 48 48"><g stroke-width="2" stroke-dasharray="3 2"><path stroke="#b11" d="M2 4h5M2 8h5M2 13h5"/><path stroke="#191" d="M9 4h5M9 8h5M9 13h5"/><path stroke="#11b" d="M16 4h5M16 8h5M16 13h5"/></g><circle cx="31" cy="18" r="5" fill="#b0a428"/></svg></a>
				</div>
				<div class="scroll tall"><b></b></div>
			</div>
		</section>
	</aside>
</main>

<footer class="status">
	<svg class="ball" viewBox="0 0 46 46"><defs><radialGradient id="bg" cx=".5" cy=".35" r=".6"><stop offset="0" stop-color="#f6b8a4"/><stop offset=".6" stop-color="#e8735c"/><stop offset="1" stop-color="#c8422f"/></radialGradient></defs><circle cx="23" cy="23" r="22.5" fill="url(#bg)"/><path fill="none" stroke="#fbd5c8" d="M17 5v33M27 4v34M5 14h36M4 25h38M8 34h30"/><path fill="none" stroke="#2a5b9a" stroke-width="1.5" d="M15 33l5-4 5-15 6 5 5-10"/><g fill="#2a5b9a"><circle cx="15" cy="33" r="2"/><circle cx="20" cy="29" r="2"/><circle cx="25" cy="14" r="2"/><circle cx="31" cy="19" r="2"/><circle cx="36" cy="9" r="2"/></g></svg>
	<span class="hint">文本(附加到图层): (实际)大小 = 22(22)</span>
	<span class="dash">--</span>
	<span>AU : 开</span>
	<span>Light Grids</span>
	<span>1:[Book1]Sheet1!Col("POD活性")[1:6]</span>
	<span>1:[Enlarged1]1!1</span>
	<span>弧度</span>
	<em class="watermark">CSDN @GNSS菜鸟</em>
</footer>
</body>
</html>
```
FILE: styles.css
```css
* {
	box-sizing: border-box;
}
body {
	margin: 0;
	height: 100vh;
	display: flex;
	flex-direction: column;
	overflow: hidden;
	font-family: "Noto Sans", "Noto Sans CJK SC", sans-serif;
	font-size: 17px;
	color: #000;
	background: linear-gradient(to right, #e9ecfb, #f4f6ff 60%);
}
h1, h2 {
	margin: 0;
	font-weight: normal;
	font-size: 18px;
}
button, select {
	font: inherit;
	color: inherit;
	margin: 0;
	padding: 0;
	border: 0;
	background: none;
}
svg {
	display: block;
	fill: none;
	stroke: currentColor;
}
.sprite {
	display: none;
}
.mini {
	font: 7px "Liberation Mono", monospace;
	fill: currentColor;
	stroke: none;
}

/* title bar */
.titlebar {
	display: flex;
	align-items: center;
	height: 34px;
	padding: 0 2px;
	background: #fff;
}
.logo {
	width: 23px;
	height: 23px;
	margin-right: 6px;
	stroke: none;
}
.sysbuttons {
	display: flex;
	margin-left: auto;
}
.sysbuttons button {
	width: 70px;
	height: 34px;
	display: grid;
	place-items: center;
}
.sysbuttons svg {
	width: 16px;
	height: 16px;
}

/* menu */
.menubar {
	display: flex;
	align-items: center;
	height: 32px;
	padding: 0 0 2px 5px;
	margin-left: 4px;
	position: relative;
}
.menubar::before {
	content: "";
	position: absolute;
	left: 0;
	top: 6px;
	height: 20px;
	border-left: 2px dotted #b0b0b8;
}
.menubar a {
	padding: 0 7px;
	color: #000;
	text-decoration: none;
	white-space: nowrap;
}

/* toolbars */
.toolrow {
	display: flex;
	gap: 4px;
	height: 32px;
	padding-left: 2px;
}
.toolrow.second {
	margin-top: 1px;
}
.toolbar {
	display: flex;
	align-items: stretch;
	flex: none;
	padding-left: 8px;
	position: relative;
	border-radius: 3px 0 0 3px;
	border-bottom: 1px solid #9094ae;
	background: linear-gradient(#f7f9ff, #e6e8f3 40%, #b5b8cf);
}
.toolbar::before {
	content: "";
	position: absolute;
	left: 3px;
	top: 6px;
	bottom: 7px;
	border-left: 2px dotted #a3a3ac;
}
.toolbar button {
	width: 22px;
	display: flex;
	align-items: center;
	justify-content: center;
	flex: none;
}
.toolbar svg {
	width: 16px;
	height: 16px;
	shape-rendering: crispEdges;
}
.toolbar > i {
	width: 1px;
	margin: 5px 4px 4px 3px;
	background: #c3c4cc;
}
.toolbar .dim {
	color: #5f6578;
}
.toolbar .off {
	color: #8a8fa0;
}
.toolbar .on {
	margin: 2px 0;
	border: 1px solid #0078d7;
	background: #cfe5f7;
}
.toolbar .drop {
	width: 31px;
	position: relative;
	justify-content: flex-start;
	padding-left: 3px;
}
.drop::after,
.combo::after,
.menu::after {
	content: "";
	border: 4px solid transparent;
	border-top-color: currentColor;
	border-bottom: 0;
}
.drop::after {
	margin-left: 3px;
	border-width: 3px;
	border-bottom: 0;
}
.second .drop {
	width: 32px;
}
.toolbar .wide {
	width: 35px;
}
.wide::after {
	margin-left: 5px;
}
.toolbar .more {
	width: 11px;
	margin-bottom: -1px;
	flex-direction: column;
	justify-content: flex-end;
	padding-bottom: 3px;
	border-radius: 0 3px 3px 0;
	background: linear-gradient(#aeb1c8, #dfe1f0 80%, #eef);
}
.more::before {
	content: "";
	width: 6px;
	height: 2px;
	margin-bottom: 2px;
	background: #000;
}
.more::after {
	content: "";
	border: 3px solid transparent;
	border-top-color: #000;
	border-bottom: 0;
}
.toolbar .axis {
	font: 20px/1 "Liberation Sans", sans-serif;
}
.toolbar .tiny {
	font: bold 8px "Liberation Mono", monospace;
}
.toolbar .serif {
	font: 18px "Liberation Serif", serif;
}
.toolbar .small {
	font-size: 15px;
	font-weight: bold;
}
.toolbar .big {
	font-size: 20px;
}
.serif sup,
.serif sub {
	font-size: 9px;
	font-weight: normal;
	line-height: 1;
}
.serif sup {
	align-self: flex-start;
	margin-top: 6px;
}
.serif sub {
	align-self: flex-end;
	margin-bottom: 7px;
}

/* drop-down lists */
.combo {
	display: flex;
	align-items: center;
	position: relative;
	flex: none;
	width: 89px;
	margin: 3px 2px 1px;
	border: 1px solid #a6a6a6;
	color: #808080;
	background: #f0f0f0;
}
.combo select {
	flex: 1;
	width: 100%;
	height: 100%;
	padding-left: 3px;
	appearance: none;
	opacity: 1;
	color: inherit;
}
.combo::after {
	position: absolute;
	right: 4px;
	top: 12px;
	border-width: 3px;
	border-bottom: 0;
}
.combo.zoom {
	width: 87px;
	margin: 4px 3px 0;
	border: 0;
	color: #000;
	background: linear-gradient(to right, #fff 75px, #cfd1e0 75px);
}
.zoom select {
	padding-bottom: 2px;
}
.combo.font {
	width: 190px;
	margin-left: 5px;
}
.font b {
	padding: 0 2px 0 10px;
	color: #000;
	font: bold 24px "Liberation Serif", serif;
}
.font select,
.linestyle select {
	background: #f4f6fd;
}
.linestyle b {
	width: 29px;
	height: 4px;
	margin-left: 4px;
	flex: none;
	background: #222;
}
.combo.swatch {
	width: 49px;
	margin: 8px 1px;
	border-right: 0;
	background: linear-gradient(to right, #eceef8 34px, #a6a6a6 34px, #a6a6a6 35px, transparent 35px);
}
.swatch::after {
	top: 6px;
}

/* vertical toolbars */
.toolbar.vertical {
	flex-direction: column;
	width: 26px;
	padding: 9px 3px 0 1px;
	border: 0;
	border-radius: 3px 3px 0 0;
	border-right: 1px solid #a3a6bc;
	background: linear-gradient(to right, #f7f9ff, #e3e5f0 50%, #b5b8cf);
}
.toolbar.tools {
	width: 34px;
}
.vertical::before {
	left: 5px;
	right: 5px;
	top: 3px;
	bottom: auto;
	border-left: 0;
	border-top: 2px dotted #a3a3ac;
}
.vertical button {
	height: 24px;
}
.vertical .on {
	margin: 0;
}
.vertical > i {
	width: auto;
	height: 1px;
	margin: 4px 2px 3px 3px;
}
.vertical .more {
	width: auto;
	height: 13px;
	margin: 0 -3px 0 -1px;
	padding: 0 4px 0 0;
	flex-direction: row;
	align-items: center;
	background: linear-gradient(to right, #e4e6f4, #aeb1c8);
	border-radius: 0 0 3px 3px;
}
.vertical .more::before {
	width: 2px;
	height: 6px;
	margin: 0 2px 0 0;
}
.vertical .more::after {
	border: 3px solid transparent;
	border-left-color: #000;
	border-right: 0;
}
.vbars {
	display: flex;
	flex-direction: column;
	align-items: flex-start;
	gap: 1px;
	padding-top: 2px;
}
.vbars.right {
	width: 32px;
	padding-left: 2px;
	padding-right: 5px;
}

/* body */
main {
	flex: 1;
	min-height: 0;
	display: flex;
}
.leftdock {
	width: 65px;
	display: flex;
	gap: 3px;
	position: relative;
}
.sidetabs {
	display: flex;
	flex-direction: column;
	gap: 14px;
	padding-top: 5px;
}
.sidetabs button {
	width: 27px;
	height: 103px;
	padding-top: 4px;
	border: 1px solid #d5d5da;
	border-left: 0;
	color: #777;
	background: #f0f0f0;
	font-size: 18px;
	line-height: 24px;
	writing-mode: vertical-rl;
	text-orientation: sideways;
	text-align: left;
}
.sidetabs .long {
	height: 157px;
}
.meter {
	position: absolute;
	left: 3px;
	bottom: 54px;
	width: 7px;
	height: 58px;
	border-radius: 4px;
	box-shadow: 0 2px 6px #c5c8d8;
	background: linear-gradient(#9a9aa4 14px, #1fc76e 14px, #2fd06e 70%, #6ff07a);
}
.center {
	flex: 1;
	min-width: 0;
	display: flex;
	flex-direction: column;
}
.desktop {
	flex: 1;
	min-height: 0;
	display: flex;
	flex-direction: column;
	border-top: 2px solid #909094;
	border-left: 1px solid #808080;
	background: #ababab;
}
.windows {
	flex: 1;
	min-height: 0;
	display: grid;
	grid-template-columns: 1fr 1fr;
}
.window {
	display: flex;
	flex-direction: column;
	min-width: 0;
	padding: 0 11px 11px 12px;
	border: 1px solid #555;
	border-radius: 6px 6px 0 0;
	color: #9a9a9a;
	background: linear-gradient(#bccad9, #d7e4f2 46px);
}
.window.active {
	padding: 0 8px 8px;
	border: 4px solid #b5008c;
	border-radius: 3px 3px 0 0;
	color: #000;
	background: linear-gradient(#9cb7d3, #bad1eb 42px);
}
.window header {
	display: flex;
	align-items: center;
	gap: 2px;
	height: 46px;
	padding: 11px 0 2px 1px;
}
.window.active header {
	height: 43px;
	padding-top: 8px;
}
.window header > svg {
	width: 24px;
	height: 24px;
	margin-right: 2px;
	shape-rendering: crispEdges;
}
.window h2 {
	flex: 1;
	overflow: hidden;
	white-space: nowrap;
}
.window header button {
	width: 50px;
	height: 29px;
	display: grid;
	place-items: center;
	border: 1px solid #7f8ea3;
	border-radius: 2px;
	background: linear-gradient(#c8d5e3, #bccada 50%, #c5d3e2);
}
.window.active header button {
	border-color: #5b718f;
	background: linear-gradient(#c0d2e6, #a2bad4 50%, #b0c6de);
}
.window header button.close {
	border-color: #6b2a25;
	background: linear-gradient(#e0a297, #c9675a 45%, #b93a28 50%, #d2563f);
}
.window button svg {
	width: 24px;
	height: 24px;
}
.canvas {
	flex: 1;
	min-height: 0;
	position: relative;
	overflow: hidden;
	border: 1px solid #6f6f6f;
	border-right-color: #fff;
	border-bottom-color: #fff;
	background: #c0c0c0;
}
.layer {
	position: absolute;
	left: 0;
	top: 0;
	width: 30px;
	height: 30px;
	padding-top: 2px;
	font: bold 24px/1 "Liberation Sans", sans-serif;
	color: #000;
	border: 2px solid #f4f4f4;
	border-right-color: #808080;
	border-bottom-color: #808080;
	background: #c0c0c0;
}
.active .layer {
	border-color: #c0c0c0;
}
.window.minimized {
	flex: none;
	width: 238px;
	height: 39px;
	margin-top: 1px;
	padding: 0 4px 0 3px;
}
.minimized header {
	height: 36px;
	padding: 0 1px;
}

/* graph pages */
.page {
	width: 100%;
	stroke: none;
	background: #fff;
}
.page.inset {
	width: calc(100% - 49px);
	margin: 9px 0 0 49px;
}
.page text {
	font-family: "Liberation Serif", "Noto Sans CJK SC", serif;
	fill: #000;
}
.page path.axis {
	stroke: #000;
	stroke-width: 2;
	shape-rendering: crispEdges;
}
.ylab text {
	font-size: 18px;
	text-anchor: end;
}
.xlab text {
	font-size: 18px;
	text-anchor: middle;
}
.page .title {
	font-size: 22px;
	font-weight: 300;
	text-anchor: middle;
}
.legend text {
	font-size: 20px;
	font-weight: 300;
}
.page .sub {
	font-size: 14px;
}
.page .mark text {
	font: 18px "Liberation Sans", sans-serif;
	text-anchor: middle;
}
.s1 {
	stroke: #4d4d4d;
	marker: url(#sq);
}
.s2 {
	stroke: #f14040;
	marker: url(#ci);
}
.s3 {
	stroke: #1a6fdf;
	marker: url(#up);
}
.s4 {
	stroke: #37ad6b;
	marker: url(#dn);
}
.cut {
	marker-start: none;
}
.key {
	marker-start: none;
	marker-end: none;
	shape-rendering: crispEdges;
}
.toolrow.plots {
	margin: 1px 0 4px;
	padding-left: 1px;
}

/* right side panels */
.panels {
	width: 228px;
	display: flex;
	flex-direction: column;
	gap: 5px;
	padding-top: 1px;
}
.panel > header {
	display: flex;
	align-items: center;
	height: 32px;
	padding: 0 1px 2px 4px;
	background: linear-gradient(#bacad8, #d6e4f2);
}
.panel h2 {
	flex: 1;
	font-size: 17px;
}
.panel header button {
	width: 17px;
	display: grid;
	place-items: center;
}
.panel header svg {
	width: 12px;
	height: 16px;
}
.panel header .menu::after {
	border-width: 5px;
	border-bottom: 0;
}
.objects {
	display: flex;
	height: 148px;
	margin-top: 1px;
	border: 2px solid #6f6f6f;
	background: #fff;
}
.tree {
	flex: 1;
	margin: 0;
	padding: 2px 0 0 1px;
	overflow: hidden;
	list-style: none;
	font-family: "Liberation Sans", "Noto Sans CJK SC", sans-serif;
	font-size: 18px;
}
.tree li {
	display: flex;
	align-items: center;
	height: 30px;
	padding-left: 2px;
	white-space: nowrap;
	position: relative;
}
.tree .selected {
	color: #fff;
	background: #0078d7;
	outline: 1px dotted #fff;
	outline-offset: -1px;
}
.tree .l1 {
	padding-left: 24px;
}
.tree .l2 {
	padding-left: 46px;
}
.tree .l3 {
	padding-left: 88px;
}
/* dotted branch lines */
.tree .l1::before,
.tree .l2::before,
.tree .l3::before {
	content: "";
	position: absolute;
	top: -6px;
	left: 11px;
	width: 12px;
	height: 21px;
	border: 1px dotted #aaa;
	border-width: 0 0 1px 1px;
}
.tree .l2::before {
	left: 33px;
}
.tree .l3::before {
	left: 55px;
	top: -15px;
	height: 30px;
}
.tree .l2 + .l3::before {
	top: -6px;
	height: 21px;
}
.fold {
	width: 18px;
	height: 18px;
	margin-right: 3px;
	display: grid;
	place-items: center;
	flex: none;
	border: 1px solid #8e8e8e;
	background: linear-gradient(#fff, #dcdcdc);
}
.fold::before {
	content: "";
	width: 12px;
	height: 2px;
	background: #3f5fae;
}
.folder {
	width: 24px;
	height: 20px;
	margin-right: 3px;
	stroke: none;
}
.tree label {
	display: flex;
	align-items: center;
}
.tree input {
	appearance: none;
	display: grid;
	place-items: center;
	flex: none;
	width: 23px;
	height: 23px;
	margin: 0 3px 0 0;
	border: 1px solid #333;
	background: #fff;
}
.tree input:checked::before {
	content: "";
	width: 15px;
	height: 7px;
	margin-top: -4px;
	border: 2px solid #333;
	border-width: 0 0 2px 2px;
	transform: rotate(-45deg);
}
.tree .l3 input {
	margin-right: 0;
}
.sample {
	width: 60px;
	height: 16px;
	margin-right: 2px;
}
.scroll {
	width: 25px;
	padding: 27px 1px 0 0;
	position: relative;
	flex: none;
	background: #f0f0f0;
}
.scroll b {
	display: block;
	height: 62px;
	background: #cdcdcd;
}
.scroll::before,
.scroll::after {
	content: "";
	position: absolute;
	left: 7px;
	top: 14px;
	width: 9px;
	height: 9px;
	border: 2px solid #555;
	border-width: 2px 0 0 2px;
	transform: rotate(45deg);
}
.scroll::after {
	top: auto;
	bottom: 12px;
	transform: rotate(225deg);
}
.scroll.tall b {
	height: 484px;
}
.apps {
	flex: 1;
	min-height: 0;
	display: flex;
	flex-direction: column;
}
.appbody {
	flex: 1;
	min-height: 0;
	margin-top: 2px;
	display: flex;
	background: #f0f0f0;
	border-right: 2px solid #8a8a8a;
}
.apptabs {
	width: 34px;
	position: relative;
	border-right: 1px solid #8a8a8a;
	padding-top: 80px;
	display: flex;
	flex-direction: column;
	gap: 12px;
	align-items: center;
}
.outline {
	position: absolute;
	left: 0;
	top: 0;
	width: 34px;
	height: 200px;
}
.apptabs button {
	position: relative;
	writing-mode: vertical-rl;
	text-orientation: sideways;
	font-size: 18px;
	line-height: 20px;
}
.apptabs .current {
	font-weight: bold;
}
.applist {
	flex: 1;
	min-width: 0;
	padding-top: 3px;
	overflow: hidden;
	border-top: 1px solid #8a8a8a;
	border-bottom: 1px solid #8a8a8a;
	background: #fff;
}
.applist a {
	display: block;
	height: 113px;
	width: 116px;
	font-size: 18px;
	line-height: 24px;
	text-align: center;
	text-decoration: none;
	color: #000;
}
.applist svg {
	width: 48px;
	height: 48px;
	margin: 0 auto 3px;
	stroke: none;
}
.applist .faded {
	color: #6d6d6d;
}
.applet {
	text-anchor: middle;
	font: 15px "Noto Sans", sans-serif;
}
.word {
	fill: #10108c;
}
.ppt {
	fill: #d9452c;
}

/* status bar */
.status {
	display: flex;
	align-items: center;
	height: 28px;
	padding-left: 46px;
	position: relative;
	border-top: 1px solid #d0d0d8;
	border-bottom: 2px solid #dcdcdc;
	background: #f0f0f0;
	font-size: 16px;
	white-space: nowrap;
}
.status span {
	padding: 0 4px 0 3px;
}
.status .hint {
	flex: 1;
	padding: 0;
	font-size: 17px;
}
.status .dash {
	padding-right: 20px;
}
.ball {
	position: absolute;
	left: 1px;
	bottom: -2px;
	width: 46px;
	height: 46px;
	stroke: none;
}
.watermark {
	position: absolute;
	right: 14px;
	top: 0;
	font-style: normal;
	color: #8f8f8f;
	opacity: .7;
	text-shadow: 1px 1px 0 #fff;
}
```
